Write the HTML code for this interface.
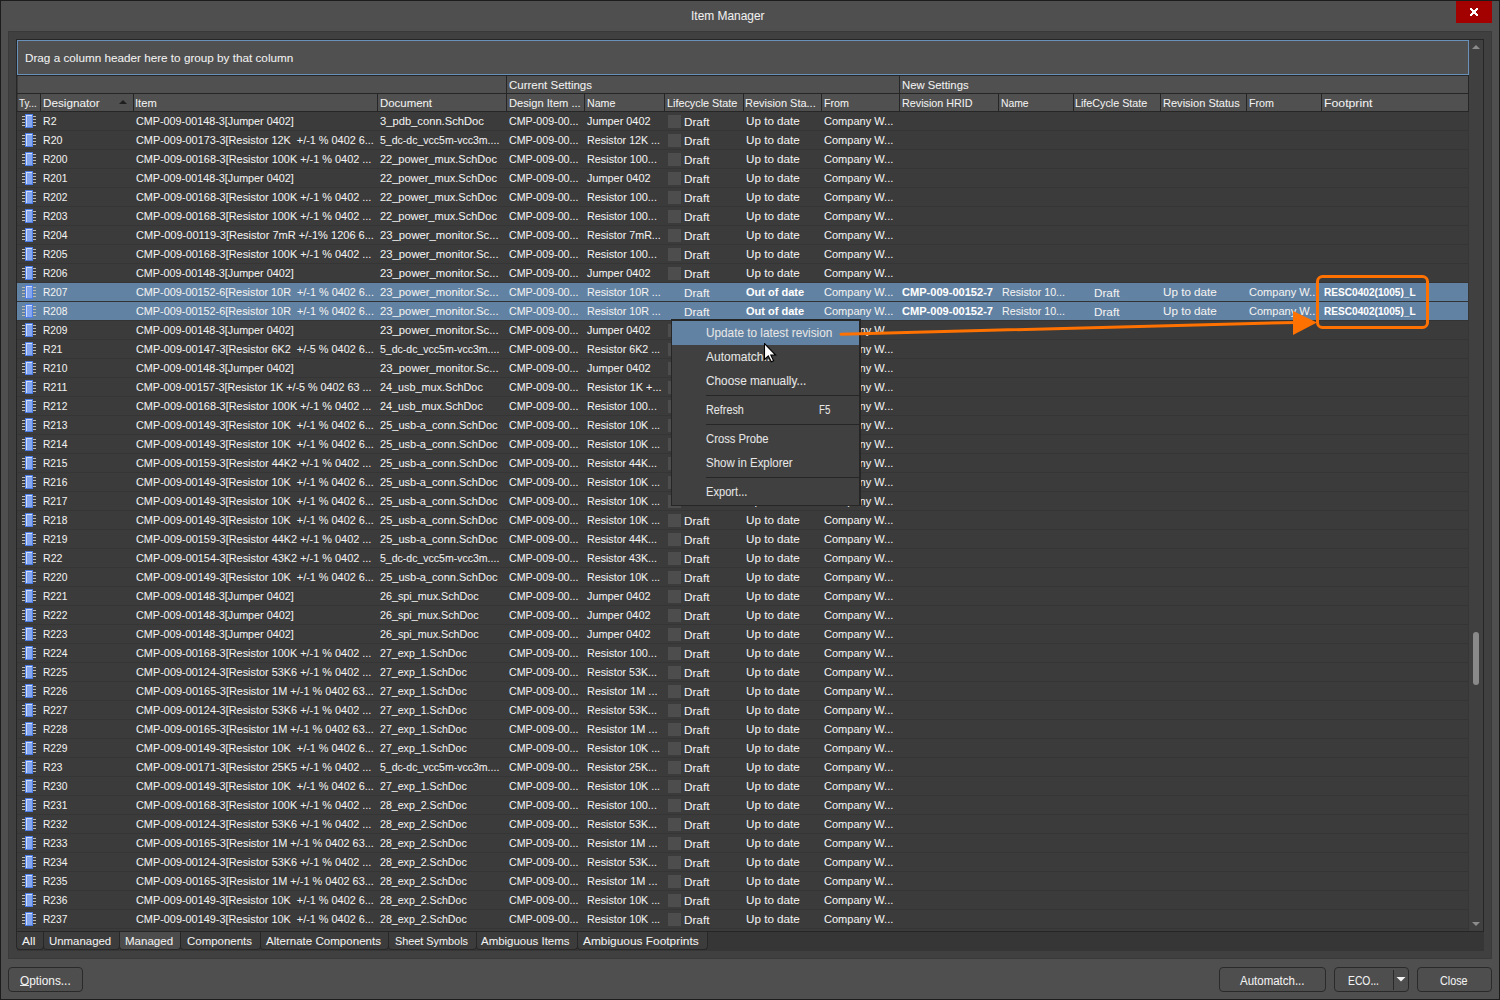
<!DOCTYPE html><html><head><meta charset="utf-8"><title>Item Manager</title><style>
*{margin:0;padding:0;box-sizing:border-box}
html,body{width:1500px;height:1000px;overflow:hidden;background:#4f4f4f}
body{position:relative;font-family:"Liberation Sans",sans-serif;font-size:11.5px;color:#f2f2f2}
.a{position:absolute}
.t{position:absolute;white-space:nowrap;transform-origin:0 0;-webkit-text-stroke:0.05px}
.hd{position:absolute;background:#505050}
.ic{position:absolute}
.ck{position:absolute;width:13px;height:13px;background:#4d4d4d}
.sep{position:absolute;left:706px;width:153px;height:1px;background:#262626}
.tab{position:absolute;top:932px;height:18px;border:1px solid #272727;border-top:none;border-radius:0 0 4px 4px}
.btn{position:absolute;top:967px;height:25px;background:#4e4e4e;border:1px solid #2a2a2a;border-radius:4px}
</style></head><body>
<div class="a" style="left:0;top:0;width:1500px;height:1px;background:#1c1c1c"></div>
<div class="a" style="left:0;top:0;width:1px;height:1000px;background:#1c1c1c"></div>
<div class="a" style="left:1499px;top:0;width:1px;height:1000px;background:#1c1c1c"></div>
<div class="a" style="left:0;top:999px;width:1500px;height:1px;background:#1c1c1c"></div>
<div class="t" style="left:690.50px;top:7px;font-size:12px;line-height:18px;height:18px;color:#f0f0f0;transform:scaleX(0.9940)">Item Manager</div>
<div class="a" style="left:1456px;top:1px;width:36px;height:22px;background:#a30000"></div>
<svg class="a" style="left:1470px;top:8px" width="8" height="8" viewBox="0 0 8 8" shape-rendering="crispEdges"><g fill="#fff"><rect x="0" y="0" width="1" height="1"/><rect x="1" y="0" width="1" height="1"/><rect x="6" y="0" width="1" height="1"/><rect x="7" y="0" width="1" height="1"/><rect x="0" y="1" width="1" height="1"/><rect x="1" y="1" width="1" height="1"/><rect x="2" y="1" width="1" height="1"/><rect x="5" y="1" width="1" height="1"/><rect x="6" y="1" width="1" height="1"/><rect x="7" y="1" width="1" height="1"/><rect x="1" y="2" width="1" height="1"/><rect x="2" y="2" width="1" height="1"/><rect x="3" y="2" width="1" height="1"/><rect x="4" y="2" width="1" height="1"/><rect x="5" y="2" width="1" height="1"/><rect x="6" y="2" width="1" height="1"/><rect x="2" y="3" width="1" height="1"/><rect x="3" y="3" width="1" height="1"/><rect x="4" y="3" width="1" height="1"/><rect x="5" y="3" width="1" height="1"/><rect x="2" y="4" width="1" height="1"/><rect x="3" y="4" width="1" height="1"/><rect x="4" y="4" width="1" height="1"/><rect x="5" y="4" width="1" height="1"/><rect x="1" y="5" width="1" height="1"/><rect x="2" y="5" width="1" height="1"/><rect x="3" y="5" width="1" height="1"/><rect x="4" y="5" width="1" height="1"/><rect x="5" y="5" width="1" height="1"/><rect x="6" y="5" width="1" height="1"/><rect x="0" y="6" width="1" height="1"/><rect x="1" y="6" width="1" height="1"/><rect x="2" y="6" width="1" height="1"/><rect x="5" y="6" width="1" height="1"/><rect x="6" y="6" width="1" height="1"/><rect x="7" y="6" width="1" height="1"/><rect x="0" y="7" width="1" height="1"/><rect x="1" y="7" width="1" height="1"/><rect x="6" y="7" width="1" height="1"/><rect x="7" y="7" width="1" height="1"/></g></svg>
<div class="a" style="left:8px;top:31px;width:1484px;height:928px;background:#404040;border:1px solid #3a3a3a"></div>
<div class="a" style="left:16px;top:39px;width:1468px;height:893px;background:#262626"></div>
<div class="a" style="left:17px;top:40px;width:1452px;height:891px;background:#3b3b3b"></div>
<div class="a" style="left:1469px;top:40px;width:14px;height:891px;background:#404040"></div>
<svg class="a" style="left:1471px;top:43px" width="10" height="8"><path d="M1 6L5 2L9 6Z" fill="#8c8c8c"/></svg>
<svg class="a" style="left:1471px;top:920px" width="10" height="8"><path d="M1 2L5 6L9 2Z" fill="#8c8c8c"/></svg>
<div class="a" style="left:1473px;top:632px;width:6px;height:53px;border-radius:3px;background:#8a8a8a"></div>
<div class="a" style="left:17px;top:40px;width:1452px;height:35px;background:#505050;border:1px solid #6991b9"></div>
<div class="t" style="left:24.50px;top:49px;font-size:11.5px;line-height:18px;height:18px;transform:scaleX(1.0186)">Drag a column header here to group by that column</div>
<div class="a" style="left:17px;top:75px;width:1452px;height:1px;background:#262626"></div>
<div class="hd" style="left:18px;top:76px;width:488px;height:17px"></div>
<div class="hd" style="left:507px;top:76px;width:392px;height:17px"></div>
<div class="hd" style="left:900px;top:76px;width:568px;height:17px"></div>
<div class="a" style="left:17px;top:93px;width:1452px;height:1px;background:#262626"></div>
<div class="a" style="left:506px;top:76px;width:1px;height:17px;background:#262626"></div>
<div class="a" style="left:899px;top:76px;width:1px;height:17px;background:#262626"></div>
<div class="a" style="left:1468px;top:76px;width:1px;height:35px;background:#262626"></div>
<div class="t" style="left:508.60px;top:77px;font-size:11.5px;line-height:17px;height:17px;transform:scaleX(0.9987)">Current Settings</div>
<div class="t" style="left:902.00px;top:77px;font-size:11.5px;line-height:17px;height:17px;transform:scaleX(0.9828)">New Settings</div>
<div class="hd" style="left:18px;top:94px;width:22px;height:17px"></div>
<div class="a" style="left:40px;top:94px;width:1px;height:17px;background:#262626"></div>
<div class="t" style="left:19.30px;top:95px;font-size:11.5px;line-height:17px;height:17px;transform:scaleX(0.8479)">Ty...</div>
<div class="hd" style="left:41px;top:94px;width:92px;height:17px"></div>
<div class="a" style="left:133px;top:94px;width:1px;height:17px;background:#262626"></div>
<div class="t" style="left:42.60px;top:95px;font-size:11.5px;line-height:17px;height:17px;transform:scaleX(1.0193)">Designator</div>
<div class="hd" style="left:134px;top:94px;width:243px;height:17px"></div>
<div class="a" style="left:377px;top:94px;width:1px;height:17px;background:#262626"></div>
<div class="t" style="left:135.30px;top:95px;font-size:11.5px;line-height:17px;height:17px;transform:scaleX(0.9698)">Item</div>
<div class="hd" style="left:378px;top:94px;width:128px;height:17px"></div>
<div class="a" style="left:506px;top:94px;width:1px;height:17px;background:#262626"></div>
<div class="t" style="left:380.00px;top:95px;font-size:11.5px;line-height:17px;height:17px;transform:scaleX(0.9920)">Document</div>
<div class="hd" style="left:507px;top:94px;width:77px;height:17px"></div>
<div class="a" style="left:584px;top:94px;width:1px;height:17px;background:#262626"></div>
<div class="t" style="left:508.60px;top:95px;font-size:11.5px;line-height:17px;height:17px;transform:scaleX(0.9671)">Design Item ...</div>
<div class="hd" style="left:585px;top:94px;width:79px;height:17px"></div>
<div class="a" style="left:664px;top:94px;width:1px;height:17px;background:#262626"></div>
<div class="t" style="left:586.60px;top:95px;font-size:11.5px;line-height:17px;height:17px;transform:scaleX(0.9255)">Name</div>
<div class="hd" style="left:665px;top:94px;width:78px;height:17px"></div>
<div class="a" style="left:743px;top:94px;width:1px;height:17px;background:#262626"></div>
<div class="t" style="left:666.60px;top:95px;font-size:11.5px;line-height:17px;height:17px;transform:scaleX(0.9412)">Lifecycle State</div>
<div class="hd" style="left:744px;top:94px;width:77px;height:17px"></div>
<div class="a" style="left:821px;top:94px;width:1px;height:17px;background:#262626"></div>
<div class="t" style="left:745.30px;top:95px;font-size:11.5px;line-height:17px;height:17px;transform:scaleX(0.9534)">Revision Sta...</div>
<div class="hd" style="left:822px;top:94px;width:77px;height:17px"></div>
<div class="a" style="left:899px;top:94px;width:1px;height:17px;background:#262626"></div>
<div class="t" style="left:823.60px;top:95px;font-size:11.5px;line-height:17px;height:17px;transform:scaleX(0.9313)">From</div>
<div class="hd" style="left:900px;top:94px;width:98px;height:17px"></div>
<div class="a" style="left:998px;top:94px;width:1px;height:17px;background:#262626"></div>
<div class="t" style="left:902.00px;top:95px;font-size:11.5px;line-height:17px;height:17px;transform:scaleX(0.9361)">Revision HRID</div>
<div class="hd" style="left:999px;top:94px;width:74px;height:17px"></div>
<div class="a" style="left:1073px;top:94px;width:1px;height:17px;background:#262626"></div>
<div class="t" style="left:1001.00px;top:95px;font-size:11.5px;line-height:17px;height:17px;transform:scaleX(0.8994)">Name</div>
<div class="hd" style="left:1074px;top:94px;width:86px;height:17px"></div>
<div class="a" style="left:1160px;top:94px;width:1px;height:17px;background:#262626"></div>
<div class="t" style="left:1075.30px;top:95px;font-size:11.5px;line-height:17px;height:17px;transform:scaleX(0.9346)">LifeCycle State</div>
<div class="hd" style="left:1161px;top:94px;width:85px;height:17px"></div>
<div class="a" style="left:1246px;top:94px;width:1px;height:17px;background:#262626"></div>
<div class="t" style="left:1162.60px;top:95px;font-size:11.5px;line-height:17px;height:17px;transform:scaleX(0.9599)">Revision Status</div>
<div class="hd" style="left:1247px;top:94px;width:74px;height:17px"></div>
<div class="a" style="left:1321px;top:94px;width:1px;height:17px;background:#262626"></div>
<div class="t" style="left:1248.60px;top:95px;font-size:11.5px;line-height:17px;height:17px;transform:scaleX(0.9313)">From</div>
<div class="hd" style="left:1322px;top:94px;width:146px;height:17px"></div>
<div class="a" style="left:1468px;top:94px;width:1px;height:17px;background:#262626"></div>
<div class="t" style="left:1323.60px;top:95px;font-size:11.5px;line-height:17px;height:17px;transform:scaleX(1.0663)">Footprint</div>
<div class="a" style="left:17px;top:111px;width:1452px;height:1px;background:#262626"></div>
<svg class="a" style="left:118px;top:99px" width="10" height="6"><path d="M1 5L5 1L9 5Z" fill="#1e1e1e"/></svg>
<div class="a" style="left:17px;top:130px;width:1451px;height:1px;background:#353535"></div>
<svg class="ic" style="left:22px;top:114px" width="15" height="14" viewBox="0 0 15 14"><g fill="#bdb9ae"><rect x="0" y="2" width="3" height="1"/><rect x="0" y="5" width="3" height="1"/><rect x="0" y="8" width="3" height="1"/><rect x="0" y="11" width="3" height="1"/><rect x="11" y="2" width="3" height="1"/><rect x="11" y="5" width="3" height="1"/><rect x="11" y="8" width="3" height="1"/><rect x="11" y="11" width="3" height="1"/></g><rect x="3" y="0" width="8" height="14" fill="#4d7de6"/><rect x="4" y="1" width="6" height="12" fill="#84a6ee"/><rect x="4" y="1" width="6" height="1" fill="#d2ddf8"/><rect x="4" y="1" width="1" height="12" fill="#d2ddf8"/></svg>
<div class="t" style="left:42.80px;top:112px;font-size:11.5px;line-height:18px;height:18px;transform:scaleX(0.9182)">R2</div>
<div class="t" style="left:135.90px;top:112px;font-size:11.5px;line-height:18px;height:18px;transform:scaleX(0.9380)">CMP-009-00148-3[Jumper 0402]</div>
<div class="t" style="left:379.50px;top:112px;font-size:11.5px;line-height:18px;height:18px;transform:scaleX(0.9730)">3_pdb_conn.SchDoc</div>
<div class="t" style="left:508.60px;top:112px;font-size:11.5px;line-height:18px;height:18px;transform:scaleX(0.9280)">CMP-009-00...</div>
<div class="t" style="left:586.80px;top:112px;font-size:11.5px;line-height:18px;height:18px;transform:scaleX(0.9460)">Jumper 0402</div>
<div class="ck" style="left:668px;top:115px"></div>
<div class="t" style="left:683.80px;top:113px;font-size:11.5px;line-height:18px;height:18px;transform:scaleX(1.0192)">Draft</div>
<div class="t" style="left:746.00px;top:112px;font-size:11.5px;line-height:18px;height:18px;transform:scaleX(1.0136)">Up to date</div>
<div class="t" style="left:824.10px;top:112px;font-size:11.5px;line-height:18px;height:18px;transform:scaleX(0.9596)">Company W...</div>
<div class="a" style="left:17px;top:149px;width:1451px;height:1px;background:#353535"></div>
<svg class="ic" style="left:22px;top:133px" width="15" height="14" viewBox="0 0 15 14"><g fill="#bdb9ae"><rect x="0" y="2" width="3" height="1"/><rect x="0" y="5" width="3" height="1"/><rect x="0" y="8" width="3" height="1"/><rect x="0" y="11" width="3" height="1"/><rect x="11" y="2" width="3" height="1"/><rect x="11" y="5" width="3" height="1"/><rect x="11" y="8" width="3" height="1"/><rect x="11" y="11" width="3" height="1"/></g><rect x="3" y="0" width="8" height="14" fill="#4d7de6"/><rect x="4" y="1" width="6" height="12" fill="#84a6ee"/><rect x="4" y="1" width="6" height="1" fill="#d2ddf8"/><rect x="4" y="1" width="1" height="12" fill="#d2ddf8"/></svg>
<div class="t" style="left:42.80px;top:131px;font-size:11.5px;line-height:18px;height:18px;transform:scaleX(0.9238)">R20</div>
<div class="t" style="left:135.90px;top:131px;font-size:11.5px;line-height:18px;height:18px;transform:scaleX(0.9457)">CMP-009-00173-3[Resistor 12K&nbsp; +/-1 % 0402 6...</div>
<div class="t" style="left:379.50px;top:131px;font-size:11.5px;line-height:18px;height:18px;transform:scaleX(0.9151)">5_dc-dc_vcc5m-vcc3m....</div>
<div class="t" style="left:508.60px;top:131px;font-size:11.5px;line-height:18px;height:18px;transform:scaleX(0.9280)">CMP-009-00...</div>
<div class="t" style="left:586.80px;top:131px;font-size:11.5px;line-height:18px;height:18px;transform:scaleX(0.9285)">Resistor 12K ...</div>
<div class="ck" style="left:668px;top:134px"></div>
<div class="t" style="left:683.80px;top:132px;font-size:11.5px;line-height:18px;height:18px;transform:scaleX(1.0192)">Draft</div>
<div class="t" style="left:746.00px;top:131px;font-size:11.5px;line-height:18px;height:18px;transform:scaleX(1.0136)">Up to date</div>
<div class="t" style="left:824.10px;top:131px;font-size:11.5px;line-height:18px;height:18px;transform:scaleX(0.9596)">Company W...</div>
<div class="a" style="left:17px;top:168px;width:1451px;height:1px;background:#353535"></div>
<svg class="ic" style="left:22px;top:152px" width="15" height="14" viewBox="0 0 15 14"><g fill="#bdb9ae"><rect x="0" y="2" width="3" height="1"/><rect x="0" y="5" width="3" height="1"/><rect x="0" y="8" width="3" height="1"/><rect x="0" y="11" width="3" height="1"/><rect x="11" y="2" width="3" height="1"/><rect x="11" y="5" width="3" height="1"/><rect x="11" y="8" width="3" height="1"/><rect x="11" y="11" width="3" height="1"/></g><rect x="3" y="0" width="8" height="14" fill="#4d7de6"/><rect x="4" y="1" width="6" height="12" fill="#84a6ee"/><rect x="4" y="1" width="6" height="1" fill="#d2ddf8"/><rect x="4" y="1" width="1" height="12" fill="#d2ddf8"/></svg>
<div class="t" style="left:42.80px;top:150px;font-size:11.5px;line-height:18px;height:18px;transform:scaleX(0.8873)">R200</div>
<div class="t" style="left:135.90px;top:150px;font-size:11.5px;line-height:18px;height:18px;transform:scaleX(0.9479)">CMP-009-00168-3[Resistor 100K +/-1 % 0402 ...</div>
<div class="t" style="left:379.50px;top:150px;font-size:11.5px;line-height:18px;height:18px;transform:scaleX(0.9575)">22_power_mux.SchDoc</div>
<div class="t" style="left:508.60px;top:150px;font-size:11.5px;line-height:18px;height:18px;transform:scaleX(0.9280)">CMP-009-00...</div>
<div class="t" style="left:586.80px;top:150px;font-size:11.5px;line-height:18px;height:18px;transform:scaleX(0.9426)">Resistor 100...</div>
<div class="ck" style="left:668px;top:153px"></div>
<div class="t" style="left:683.80px;top:151px;font-size:11.5px;line-height:18px;height:18px;transform:scaleX(1.0192)">Draft</div>
<div class="t" style="left:746.00px;top:150px;font-size:11.5px;line-height:18px;height:18px;transform:scaleX(1.0136)">Up to date</div>
<div class="t" style="left:824.10px;top:150px;font-size:11.5px;line-height:18px;height:18px;transform:scaleX(0.9596)">Company W...</div>
<div class="a" style="left:17px;top:187px;width:1451px;height:1px;background:#353535"></div>
<svg class="ic" style="left:22px;top:171px" width="15" height="14" viewBox="0 0 15 14"><g fill="#bdb9ae"><rect x="0" y="2" width="3" height="1"/><rect x="0" y="5" width="3" height="1"/><rect x="0" y="8" width="3" height="1"/><rect x="0" y="11" width="3" height="1"/><rect x="11" y="2" width="3" height="1"/><rect x="11" y="5" width="3" height="1"/><rect x="11" y="8" width="3" height="1"/><rect x="11" y="11" width="3" height="1"/></g><rect x="3" y="0" width="8" height="14" fill="#4d7de6"/><rect x="4" y="1" width="6" height="12" fill="#84a6ee"/><rect x="4" y="1" width="6" height="1" fill="#d2ddf8"/><rect x="4" y="1" width="1" height="12" fill="#d2ddf8"/></svg>
<div class="t" style="left:42.80px;top:169px;font-size:11.5px;line-height:18px;height:18px;transform:scaleX(0.8873)">R201</div>
<div class="t" style="left:135.90px;top:169px;font-size:11.5px;line-height:18px;height:18px;transform:scaleX(0.9380)">CMP-009-00148-3[Jumper 0402]</div>
<div class="t" style="left:379.50px;top:169px;font-size:11.5px;line-height:18px;height:18px;transform:scaleX(0.9575)">22_power_mux.SchDoc</div>
<div class="t" style="left:508.60px;top:169px;font-size:11.5px;line-height:18px;height:18px;transform:scaleX(0.9280)">CMP-009-00...</div>
<div class="t" style="left:586.80px;top:169px;font-size:11.5px;line-height:18px;height:18px;transform:scaleX(0.9460)">Jumper 0402</div>
<div class="ck" style="left:668px;top:172px"></div>
<div class="t" style="left:683.80px;top:170px;font-size:11.5px;line-height:18px;height:18px;transform:scaleX(1.0192)">Draft</div>
<div class="t" style="left:746.00px;top:169px;font-size:11.5px;line-height:18px;height:18px;transform:scaleX(1.0136)">Up to date</div>
<div class="t" style="left:824.10px;top:169px;font-size:11.5px;line-height:18px;height:18px;transform:scaleX(0.9596)">Company W...</div>
<div class="a" style="left:17px;top:206px;width:1451px;height:1px;background:#353535"></div>
<svg class="ic" style="left:22px;top:190px" width="15" height="14" viewBox="0 0 15 14"><g fill="#bdb9ae"><rect x="0" y="2" width="3" height="1"/><rect x="0" y="5" width="3" height="1"/><rect x="0" y="8" width="3" height="1"/><rect x="0" y="11" width="3" height="1"/><rect x="11" y="2" width="3" height="1"/><rect x="11" y="5" width="3" height="1"/><rect x="11" y="8" width="3" height="1"/><rect x="11" y="11" width="3" height="1"/></g><rect x="3" y="0" width="8" height="14" fill="#4d7de6"/><rect x="4" y="1" width="6" height="12" fill="#84a6ee"/><rect x="4" y="1" width="6" height="1" fill="#d2ddf8"/><rect x="4" y="1" width="1" height="12" fill="#d2ddf8"/></svg>
<div class="t" style="left:42.80px;top:188px;font-size:11.5px;line-height:18px;height:18px;transform:scaleX(0.8873)">R202</div>
<div class="t" style="left:135.90px;top:188px;font-size:11.5px;line-height:18px;height:18px;transform:scaleX(0.9479)">CMP-009-00168-3[Resistor 100K +/-1 % 0402 ...</div>
<div class="t" style="left:379.50px;top:188px;font-size:11.5px;line-height:18px;height:18px;transform:scaleX(0.9575)">22_power_mux.SchDoc</div>
<div class="t" style="left:508.60px;top:188px;font-size:11.5px;line-height:18px;height:18px;transform:scaleX(0.9280)">CMP-009-00...</div>
<div class="t" style="left:586.80px;top:188px;font-size:11.5px;line-height:18px;height:18px;transform:scaleX(0.9426)">Resistor 100...</div>
<div class="ck" style="left:668px;top:191px"></div>
<div class="t" style="left:683.80px;top:189px;font-size:11.5px;line-height:18px;height:18px;transform:scaleX(1.0192)">Draft</div>
<div class="t" style="left:746.00px;top:188px;font-size:11.5px;line-height:18px;height:18px;transform:scaleX(1.0136)">Up to date</div>
<div class="t" style="left:824.10px;top:188px;font-size:11.5px;line-height:18px;height:18px;transform:scaleX(0.9596)">Company W...</div>
<div class="a" style="left:17px;top:225px;width:1451px;height:1px;background:#353535"></div>
<svg class="ic" style="left:22px;top:209px" width="15" height="14" viewBox="0 0 15 14"><g fill="#bdb9ae"><rect x="0" y="2" width="3" height="1"/><rect x="0" y="5" width="3" height="1"/><rect x="0" y="8" width="3" height="1"/><rect x="0" y="11" width="3" height="1"/><rect x="11" y="2" width="3" height="1"/><rect x="11" y="5" width="3" height="1"/><rect x="11" y="8" width="3" height="1"/><rect x="11" y="11" width="3" height="1"/></g><rect x="3" y="0" width="8" height="14" fill="#4d7de6"/><rect x="4" y="1" width="6" height="12" fill="#84a6ee"/><rect x="4" y="1" width="6" height="1" fill="#d2ddf8"/><rect x="4" y="1" width="1" height="12" fill="#d2ddf8"/></svg>
<div class="t" style="left:42.80px;top:207px;font-size:11.5px;line-height:18px;height:18px;transform:scaleX(0.8873)">R203</div>
<div class="t" style="left:135.90px;top:207px;font-size:11.5px;line-height:18px;height:18px;transform:scaleX(0.9479)">CMP-009-00168-3[Resistor 100K +/-1 % 0402 ...</div>
<div class="t" style="left:379.50px;top:207px;font-size:11.5px;line-height:18px;height:18px;transform:scaleX(0.9575)">22_power_mux.SchDoc</div>
<div class="t" style="left:508.60px;top:207px;font-size:11.5px;line-height:18px;height:18px;transform:scaleX(0.9280)">CMP-009-00...</div>
<div class="t" style="left:586.80px;top:207px;font-size:11.5px;line-height:18px;height:18px;transform:scaleX(0.9426)">Resistor 100...</div>
<div class="ck" style="left:668px;top:210px"></div>
<div class="t" style="left:683.80px;top:208px;font-size:11.5px;line-height:18px;height:18px;transform:scaleX(1.0192)">Draft</div>
<div class="t" style="left:746.00px;top:207px;font-size:11.5px;line-height:18px;height:18px;transform:scaleX(1.0136)">Up to date</div>
<div class="t" style="left:824.10px;top:207px;font-size:11.5px;line-height:18px;height:18px;transform:scaleX(0.9596)">Company W...</div>
<div class="a" style="left:17px;top:244px;width:1451px;height:1px;background:#353535"></div>
<svg class="ic" style="left:22px;top:228px" width="15" height="14" viewBox="0 0 15 14"><g fill="#bdb9ae"><rect x="0" y="2" width="3" height="1"/><rect x="0" y="5" width="3" height="1"/><rect x="0" y="8" width="3" height="1"/><rect x="0" y="11" width="3" height="1"/><rect x="11" y="2" width="3" height="1"/><rect x="11" y="5" width="3" height="1"/><rect x="11" y="8" width="3" height="1"/><rect x="11" y="11" width="3" height="1"/></g><rect x="3" y="0" width="8" height="14" fill="#4d7de6"/><rect x="4" y="1" width="6" height="12" fill="#84a6ee"/><rect x="4" y="1" width="6" height="1" fill="#d2ddf8"/><rect x="4" y="1" width="1" height="12" fill="#d2ddf8"/></svg>
<div class="t" style="left:42.80px;top:226px;font-size:11.5px;line-height:18px;height:18px;transform:scaleX(0.8873)">R204</div>
<div class="t" style="left:135.90px;top:226px;font-size:11.5px;line-height:18px;height:18px;transform:scaleX(0.9589)">CMP-009-00119-3[Resistor 7mR +/-1% 1206 6...</div>
<div class="t" style="left:379.50px;top:226px;font-size:11.5px;line-height:18px;height:18px;transform:scaleX(0.9816)">23_power_monitor.Sc...</div>
<div class="t" style="left:508.60px;top:226px;font-size:11.5px;line-height:18px;height:18px;transform:scaleX(0.9280)">CMP-009-00...</div>
<div class="t" style="left:586.80px;top:226px;font-size:11.5px;line-height:18px;height:18px;transform:scaleX(0.9312)">Resistor 7mR...</div>
<div class="ck" style="left:668px;top:229px"></div>
<div class="t" style="left:683.80px;top:227px;font-size:11.5px;line-height:18px;height:18px;transform:scaleX(1.0192)">Draft</div>
<div class="t" style="left:746.00px;top:226px;font-size:11.5px;line-height:18px;height:18px;transform:scaleX(1.0136)">Up to date</div>
<div class="t" style="left:824.10px;top:226px;font-size:11.5px;line-height:18px;height:18px;transform:scaleX(0.9596)">Company W...</div>
<div class="a" style="left:17px;top:263px;width:1451px;height:1px;background:#353535"></div>
<svg class="ic" style="left:22px;top:247px" width="15" height="14" viewBox="0 0 15 14"><g fill="#bdb9ae"><rect x="0" y="2" width="3" height="1"/><rect x="0" y="5" width="3" height="1"/><rect x="0" y="8" width="3" height="1"/><rect x="0" y="11" width="3" height="1"/><rect x="11" y="2" width="3" height="1"/><rect x="11" y="5" width="3" height="1"/><rect x="11" y="8" width="3" height="1"/><rect x="11" y="11" width="3" height="1"/></g><rect x="3" y="0" width="8" height="14" fill="#4d7de6"/><rect x="4" y="1" width="6" height="12" fill="#84a6ee"/><rect x="4" y="1" width="6" height="1" fill="#d2ddf8"/><rect x="4" y="1" width="1" height="12" fill="#d2ddf8"/></svg>
<div class="t" style="left:42.80px;top:245px;font-size:11.5px;line-height:18px;height:18px;transform:scaleX(0.8873)">R205</div>
<div class="t" style="left:135.90px;top:245px;font-size:11.5px;line-height:18px;height:18px;transform:scaleX(0.9479)">CMP-009-00168-3[Resistor 100K +/-1 % 0402 ...</div>
<div class="t" style="left:379.50px;top:245px;font-size:11.5px;line-height:18px;height:18px;transform:scaleX(0.9816)">23_power_monitor.Sc...</div>
<div class="t" style="left:508.60px;top:245px;font-size:11.5px;line-height:18px;height:18px;transform:scaleX(0.9280)">CMP-009-00...</div>
<div class="t" style="left:586.80px;top:245px;font-size:11.5px;line-height:18px;height:18px;transform:scaleX(0.9426)">Resistor 100...</div>
<div class="ck" style="left:668px;top:248px"></div>
<div class="t" style="left:683.80px;top:246px;font-size:11.5px;line-height:18px;height:18px;transform:scaleX(1.0192)">Draft</div>
<div class="t" style="left:746.00px;top:245px;font-size:11.5px;line-height:18px;height:18px;transform:scaleX(1.0136)">Up to date</div>
<div class="t" style="left:824.10px;top:245px;font-size:11.5px;line-height:18px;height:18px;transform:scaleX(0.9596)">Company W...</div>
<div class="a" style="left:17px;top:282px;width:1451px;height:1px;background:#353535"></div>
<svg class="ic" style="left:22px;top:266px" width="15" height="14" viewBox="0 0 15 14"><g fill="#bdb9ae"><rect x="0" y="2" width="3" height="1"/><rect x="0" y="5" width="3" height="1"/><rect x="0" y="8" width="3" height="1"/><rect x="0" y="11" width="3" height="1"/><rect x="11" y="2" width="3" height="1"/><rect x="11" y="5" width="3" height="1"/><rect x="11" y="8" width="3" height="1"/><rect x="11" y="11" width="3" height="1"/></g><rect x="3" y="0" width="8" height="14" fill="#4d7de6"/><rect x="4" y="1" width="6" height="12" fill="#84a6ee"/><rect x="4" y="1" width="6" height="1" fill="#d2ddf8"/><rect x="4" y="1" width="1" height="12" fill="#d2ddf8"/></svg>
<div class="t" style="left:42.80px;top:264px;font-size:11.5px;line-height:18px;height:18px;transform:scaleX(0.8873)">R206</div>
<div class="t" style="left:135.90px;top:264px;font-size:11.5px;line-height:18px;height:18px;transform:scaleX(0.9380)">CMP-009-00148-3[Jumper 0402]</div>
<div class="t" style="left:379.50px;top:264px;font-size:11.5px;line-height:18px;height:18px;transform:scaleX(0.9816)">23_power_monitor.Sc...</div>
<div class="t" style="left:508.60px;top:264px;font-size:11.5px;line-height:18px;height:18px;transform:scaleX(0.9280)">CMP-009-00...</div>
<div class="t" style="left:586.80px;top:264px;font-size:11.5px;line-height:18px;height:18px;transform:scaleX(0.9460)">Jumper 0402</div>
<div class="ck" style="left:668px;top:267px"></div>
<div class="t" style="left:683.80px;top:265px;font-size:11.5px;line-height:18px;height:18px;transform:scaleX(1.0192)">Draft</div>
<div class="t" style="left:746.00px;top:264px;font-size:11.5px;line-height:18px;height:18px;transform:scaleX(1.0136)">Up to date</div>
<div class="t" style="left:824.10px;top:264px;font-size:11.5px;line-height:18px;height:18px;transform:scaleX(0.9596)">Company W...</div>
<div class="a" style="left:17px;top:283px;width:1451px;height:18px;background:#6282a3"></div>
<div class="a" style="left:17px;top:301px;width:1451px;height:1px;background:#333333"></div>
<svg class="ic" style="left:22px;top:285px" width="15" height="14" viewBox="0 0 15 14"><g fill="#bdb9ae"><rect x="0" y="2" width="3" height="1"/><rect x="0" y="5" width="3" height="1"/><rect x="0" y="8" width="3" height="1"/><rect x="0" y="11" width="3" height="1"/><rect x="11" y="2" width="3" height="1"/><rect x="11" y="5" width="3" height="1"/><rect x="11" y="8" width="3" height="1"/><rect x="11" y="11" width="3" height="1"/></g><rect x="3" y="0" width="8" height="14" fill="#4d7de6"/><rect x="4" y="1" width="6" height="12" fill="#84a6ee"/><rect x="4" y="1" width="6" height="1" fill="#d2ddf8"/><rect x="4" y="1" width="1" height="12" fill="#d2ddf8"/></svg>
<div class="t" style="left:42.80px;top:283px;font-size:11.5px;line-height:18px;height:18px;transform:scaleX(0.8873)">R207</div>
<div class="t" style="left:135.90px;top:283px;font-size:11.5px;line-height:18px;height:18px;transform:scaleX(0.9434)">CMP-009-00152-6[Resistor 10R&nbsp; +/-1 % 0402 6...</div>
<div class="t" style="left:379.50px;top:283px;font-size:11.5px;line-height:18px;height:18px;transform:scaleX(0.9816)">23_power_monitor.Sc...</div>
<div class="t" style="left:508.60px;top:283px;font-size:11.5px;line-height:18px;height:18px;transform:scaleX(0.9280)">CMP-009-00...</div>
<div class="t" style="left:586.80px;top:283px;font-size:11.5px;line-height:18px;height:18px;transform:scaleX(0.9312)">Resistor 10R ...</div>
<div class="t" style="left:683.80px;top:284px;font-size:11.5px;line-height:18px;height:18px;transform:scaleX(1.0192)">Draft</div>
<div class="t" style="left:746.00px;top:283px;font-size:11.5px;line-height:18px;height:18px;font-weight:bold;color:#fff;transform:scaleX(0.9571)">Out of date</div>
<div class="t" style="left:824.10px;top:283px;font-size:11.5px;line-height:18px;height:18px;transform:scaleX(0.9596)">Company W...</div>
<div class="t" style="left:902.30px;top:283px;font-size:11.5px;line-height:18px;height:18px;font-weight:bold;color:#fff;transform:scaleX(0.9618)">CMP-009-00152-7</div>
<div class="t" style="left:1001.50px;top:283px;font-size:11.5px;line-height:18px;height:18px;transform:scaleX(0.9299)">Resistor 10...</div>
<div class="t" style="left:1093.60px;top:284px;font-size:11.5px;line-height:18px;height:18px;transform:scaleX(1.0192)">Draft</div>
<div class="t" style="left:1163.30px;top:283px;font-size:11.5px;line-height:18px;height:18px;transform:scaleX(1.0136)">Up to date</div>
<div class="t" style="left:1249.30px;top:283px;font-size:11.5px;line-height:18px;height:18px;transform:scaleX(0.9596)">Company W...</div>
<div class="t" style="left:1324.30px;top:283px;font-size:11.5px;line-height:18px;height:18px;font-weight:bold;color:#fff;transform:scaleX(0.8791)">RESC0402(1005)_L</div>
<div class="a" style="left:17px;top:302px;width:1451px;height:18px;background:#6282a3"></div>
<div class="a" style="left:17px;top:320px;width:1451px;height:1px;background:#333333"></div>
<svg class="ic" style="left:22px;top:304px" width="15" height="14" viewBox="0 0 15 14"><g fill="#bdb9ae"><rect x="0" y="2" width="3" height="1"/><rect x="0" y="5" width="3" height="1"/><rect x="0" y="8" width="3" height="1"/><rect x="0" y="11" width="3" height="1"/><rect x="11" y="2" width="3" height="1"/><rect x="11" y="5" width="3" height="1"/><rect x="11" y="8" width="3" height="1"/><rect x="11" y="11" width="3" height="1"/></g><rect x="3" y="0" width="8" height="14" fill="#4d7de6"/><rect x="4" y="1" width="6" height="12" fill="#84a6ee"/><rect x="4" y="1" width="6" height="1" fill="#d2ddf8"/><rect x="4" y="1" width="1" height="12" fill="#d2ddf8"/></svg>
<div class="t" style="left:42.80px;top:302px;font-size:11.5px;line-height:18px;height:18px;transform:scaleX(0.8873)">R208</div>
<div class="t" style="left:135.90px;top:302px;font-size:11.5px;line-height:18px;height:18px;transform:scaleX(0.9434)">CMP-009-00152-6[Resistor 10R&nbsp; +/-1 % 0402 6...</div>
<div class="t" style="left:379.50px;top:302px;font-size:11.5px;line-height:18px;height:18px;transform:scaleX(0.9816)">23_power_monitor.Sc...</div>
<div class="t" style="left:508.60px;top:302px;font-size:11.5px;line-height:18px;height:18px;transform:scaleX(0.9280)">CMP-009-00...</div>
<div class="t" style="left:586.80px;top:302px;font-size:11.5px;line-height:18px;height:18px;transform:scaleX(0.9312)">Resistor 10R ...</div>
<div class="t" style="left:683.80px;top:303px;font-size:11.5px;line-height:18px;height:18px;transform:scaleX(1.0192)">Draft</div>
<div class="t" style="left:746.00px;top:302px;font-size:11.5px;line-height:18px;height:18px;font-weight:bold;color:#fff;transform:scaleX(0.9571)">Out of date</div>
<div class="t" style="left:824.10px;top:302px;font-size:11.5px;line-height:18px;height:18px;transform:scaleX(0.9596)">Company W...</div>
<div class="t" style="left:902.30px;top:302px;font-size:11.5px;line-height:18px;height:18px;font-weight:bold;color:#fff;transform:scaleX(0.9618)">CMP-009-00152-7</div>
<div class="t" style="left:1001.50px;top:302px;font-size:11.5px;line-height:18px;height:18px;transform:scaleX(0.9299)">Resistor 10...</div>
<div class="t" style="left:1093.60px;top:303px;font-size:11.5px;line-height:18px;height:18px;transform:scaleX(1.0192)">Draft</div>
<div class="t" style="left:1163.30px;top:302px;font-size:11.5px;line-height:18px;height:18px;transform:scaleX(1.0136)">Up to date</div>
<div class="t" style="left:1249.30px;top:302px;font-size:11.5px;line-height:18px;height:18px;transform:scaleX(0.9596)">Company W...</div>
<div class="t" style="left:1324.30px;top:302px;font-size:11.5px;line-height:18px;height:18px;font-weight:bold;color:#fff;transform:scaleX(0.8791)">RESC0402(1005)_L</div>
<div class="a" style="left:17px;top:339px;width:1451px;height:1px;background:#353535"></div>
<svg class="ic" style="left:22px;top:323px" width="15" height="14" viewBox="0 0 15 14"><g fill="#bdb9ae"><rect x="0" y="2" width="3" height="1"/><rect x="0" y="5" width="3" height="1"/><rect x="0" y="8" width="3" height="1"/><rect x="0" y="11" width="3" height="1"/><rect x="11" y="2" width="3" height="1"/><rect x="11" y="5" width="3" height="1"/><rect x="11" y="8" width="3" height="1"/><rect x="11" y="11" width="3" height="1"/></g><rect x="3" y="0" width="8" height="14" fill="#4d7de6"/><rect x="4" y="1" width="6" height="12" fill="#84a6ee"/><rect x="4" y="1" width="6" height="1" fill="#d2ddf8"/><rect x="4" y="1" width="1" height="12" fill="#d2ddf8"/></svg>
<div class="t" style="left:42.80px;top:321px;font-size:11.5px;line-height:18px;height:18px;transform:scaleX(0.8873)">R209</div>
<div class="t" style="left:135.90px;top:321px;font-size:11.5px;line-height:18px;height:18px;transform:scaleX(0.9380)">CMP-009-00148-3[Jumper 0402]</div>
<div class="t" style="left:379.50px;top:321px;font-size:11.5px;line-height:18px;height:18px;transform:scaleX(0.9816)">23_power_monitor.Sc...</div>
<div class="t" style="left:508.60px;top:321px;font-size:11.5px;line-height:18px;height:18px;transform:scaleX(0.9280)">CMP-009-00...</div>
<div class="t" style="left:586.80px;top:321px;font-size:11.5px;line-height:18px;height:18px;transform:scaleX(0.9460)">Jumper 0402</div>
<div class="ck" style="left:668px;top:324px"></div>
<div class="t" style="left:683.80px;top:322px;font-size:11.5px;line-height:18px;height:18px;transform:scaleX(1.0192)">Draft</div>
<div class="t" style="left:746.00px;top:321px;font-size:11.5px;line-height:18px;height:18px;transform:scaleX(1.0136)">Up to date</div>
<div class="t" style="left:824.10px;top:321px;font-size:11.5px;line-height:18px;height:18px;transform:scaleX(0.9596)">Company W...</div>
<div class="a" style="left:17px;top:358px;width:1451px;height:1px;background:#353535"></div>
<svg class="ic" style="left:22px;top:342px" width="15" height="14" viewBox="0 0 15 14"><g fill="#bdb9ae"><rect x="0" y="2" width="3" height="1"/><rect x="0" y="5" width="3" height="1"/><rect x="0" y="8" width="3" height="1"/><rect x="0" y="11" width="3" height="1"/><rect x="11" y="2" width="3" height="1"/><rect x="11" y="5" width="3" height="1"/><rect x="11" y="8" width="3" height="1"/><rect x="11" y="11" width="3" height="1"/></g><rect x="3" y="0" width="8" height="14" fill="#4d7de6"/><rect x="4" y="1" width="6" height="12" fill="#84a6ee"/><rect x="4" y="1" width="6" height="1" fill="#d2ddf8"/><rect x="4" y="1" width="1" height="12" fill="#d2ddf8"/></svg>
<div class="t" style="left:42.80px;top:340px;font-size:11.5px;line-height:18px;height:18px;transform:scaleX(0.9238)">R21</div>
<div class="t" style="left:135.90px;top:340px;font-size:11.5px;line-height:18px;height:18px;transform:scaleX(0.9457)">CMP-009-00147-3[Resistor 6K2&nbsp; +/-5 % 0402 6...</div>
<div class="t" style="left:379.50px;top:340px;font-size:11.5px;line-height:18px;height:18px;transform:scaleX(0.9151)">5_dc-dc_vcc5m-vcc3m....</div>
<div class="t" style="left:508.60px;top:340px;font-size:11.5px;line-height:18px;height:18px;transform:scaleX(0.9280)">CMP-009-00...</div>
<div class="t" style="left:586.80px;top:340px;font-size:11.5px;line-height:18px;height:18px;transform:scaleX(0.9297)">Resistor 6K2 ...</div>
<div class="ck" style="left:668px;top:343px"></div>
<div class="t" style="left:683.80px;top:341px;font-size:11.5px;line-height:18px;height:18px;transform:scaleX(1.0192)">Draft</div>
<div class="t" style="left:746.00px;top:340px;font-size:11.5px;line-height:18px;height:18px;transform:scaleX(1.0136)">Up to date</div>
<div class="t" style="left:824.10px;top:340px;font-size:11.5px;line-height:18px;height:18px;transform:scaleX(0.9596)">Company W...</div>
<div class="a" style="left:17px;top:377px;width:1451px;height:1px;background:#353535"></div>
<svg class="ic" style="left:22px;top:361px" width="15" height="14" viewBox="0 0 15 14"><g fill="#bdb9ae"><rect x="0" y="2" width="3" height="1"/><rect x="0" y="5" width="3" height="1"/><rect x="0" y="8" width="3" height="1"/><rect x="0" y="11" width="3" height="1"/><rect x="11" y="2" width="3" height="1"/><rect x="11" y="5" width="3" height="1"/><rect x="11" y="8" width="3" height="1"/><rect x="11" y="11" width="3" height="1"/></g><rect x="3" y="0" width="8" height="14" fill="#4d7de6"/><rect x="4" y="1" width="6" height="12" fill="#84a6ee"/><rect x="4" y="1" width="6" height="1" fill="#d2ddf8"/><rect x="4" y="1" width="1" height="12" fill="#d2ddf8"/></svg>
<div class="t" style="left:42.80px;top:359px;font-size:11.5px;line-height:18px;height:18px;transform:scaleX(0.8873)">R210</div>
<div class="t" style="left:135.90px;top:359px;font-size:11.5px;line-height:18px;height:18px;transform:scaleX(0.9380)">CMP-009-00148-3[Jumper 0402]</div>
<div class="t" style="left:379.50px;top:359px;font-size:11.5px;line-height:18px;height:18px;transform:scaleX(0.9816)">23_power_monitor.Sc...</div>
<div class="t" style="left:508.60px;top:359px;font-size:11.5px;line-height:18px;height:18px;transform:scaleX(0.9280)">CMP-009-00...</div>
<div class="t" style="left:586.80px;top:359px;font-size:11.5px;line-height:18px;height:18px;transform:scaleX(0.9460)">Jumper 0402</div>
<div class="ck" style="left:668px;top:362px"></div>
<div class="t" style="left:683.80px;top:360px;font-size:11.5px;line-height:18px;height:18px;transform:scaleX(1.0192)">Draft</div>
<div class="t" style="left:746.00px;top:359px;font-size:11.5px;line-height:18px;height:18px;transform:scaleX(1.0136)">Up to date</div>
<div class="t" style="left:824.10px;top:359px;font-size:11.5px;line-height:18px;height:18px;transform:scaleX(0.9596)">Company W...</div>
<div class="a" style="left:17px;top:396px;width:1451px;height:1px;background:#353535"></div>
<svg class="ic" style="left:22px;top:380px" width="15" height="14" viewBox="0 0 15 14"><g fill="#bdb9ae"><rect x="0" y="2" width="3" height="1"/><rect x="0" y="5" width="3" height="1"/><rect x="0" y="8" width="3" height="1"/><rect x="0" y="11" width="3" height="1"/><rect x="11" y="2" width="3" height="1"/><rect x="11" y="5" width="3" height="1"/><rect x="11" y="8" width="3" height="1"/><rect x="11" y="11" width="3" height="1"/></g><rect x="3" y="0" width="8" height="14" fill="#4d7de6"/><rect x="4" y="1" width="6" height="12" fill="#84a6ee"/><rect x="4" y="1" width="6" height="1" fill="#d2ddf8"/><rect x="4" y="1" width="1" height="12" fill="#d2ddf8"/></svg>
<div class="t" style="left:42.80px;top:378px;font-size:11.5px;line-height:18px;height:18px;transform:scaleX(0.9159)">R211</div>
<div class="t" style="left:135.90px;top:378px;font-size:11.5px;line-height:18px;height:18px;transform:scaleX(0.9358)">CMP-009-00157-3[Resistor 1K +/-5 % 0402 63 ...</div>
<div class="t" style="left:379.50px;top:378px;font-size:11.5px;line-height:18px;height:18px;transform:scaleX(0.9404)">24_usb_mux.SchDoc</div>
<div class="t" style="left:508.60px;top:378px;font-size:11.5px;line-height:18px;height:18px;transform:scaleX(0.9280)">CMP-009-00...</div>
<div class="t" style="left:586.80px;top:378px;font-size:11.5px;line-height:18px;height:18px;transform:scaleX(0.9438)">Resistor 1K +...</div>
<div class="ck" style="left:668px;top:381px"></div>
<div class="t" style="left:683.80px;top:379px;font-size:11.5px;line-height:18px;height:18px;transform:scaleX(1.0192)">Draft</div>
<div class="t" style="left:746.00px;top:378px;font-size:11.5px;line-height:18px;height:18px;transform:scaleX(1.0136)">Up to date</div>
<div class="t" style="left:824.10px;top:378px;font-size:11.5px;line-height:18px;height:18px;transform:scaleX(0.9596)">Company W...</div>
<div class="a" style="left:17px;top:415px;width:1451px;height:1px;background:#353535"></div>
<svg class="ic" style="left:22px;top:399px" width="15" height="14" viewBox="0 0 15 14"><g fill="#bdb9ae"><rect x="0" y="2" width="3" height="1"/><rect x="0" y="5" width="3" height="1"/><rect x="0" y="8" width="3" height="1"/><rect x="0" y="11" width="3" height="1"/><rect x="11" y="2" width="3" height="1"/><rect x="11" y="5" width="3" height="1"/><rect x="11" y="8" width="3" height="1"/><rect x="11" y="11" width="3" height="1"/></g><rect x="3" y="0" width="8" height="14" fill="#4d7de6"/><rect x="4" y="1" width="6" height="12" fill="#84a6ee"/><rect x="4" y="1" width="6" height="1" fill="#d2ddf8"/><rect x="4" y="1" width="1" height="12" fill="#d2ddf8"/></svg>
<div class="t" style="left:42.80px;top:397px;font-size:11.5px;line-height:18px;height:18px;transform:scaleX(0.8873)">R212</div>
<div class="t" style="left:135.90px;top:397px;font-size:11.5px;line-height:18px;height:18px;transform:scaleX(0.9479)">CMP-009-00168-3[Resistor 100K +/-1 % 0402 ...</div>
<div class="t" style="left:379.50px;top:397px;font-size:11.5px;line-height:18px;height:18px;transform:scaleX(0.9404)">24_usb_mux.SchDoc</div>
<div class="t" style="left:508.60px;top:397px;font-size:11.5px;line-height:18px;height:18px;transform:scaleX(0.9280)">CMP-009-00...</div>
<div class="t" style="left:586.80px;top:397px;font-size:11.5px;line-height:18px;height:18px;transform:scaleX(0.9426)">Resistor 100...</div>
<div class="ck" style="left:668px;top:400px"></div>
<div class="t" style="left:683.80px;top:398px;font-size:11.5px;line-height:18px;height:18px;transform:scaleX(1.0192)">Draft</div>
<div class="t" style="left:746.00px;top:397px;font-size:11.5px;line-height:18px;height:18px;transform:scaleX(1.0136)">Up to date</div>
<div class="t" style="left:824.10px;top:397px;font-size:11.5px;line-height:18px;height:18px;transform:scaleX(0.9596)">Company W...</div>
<div class="a" style="left:17px;top:434px;width:1451px;height:1px;background:#353535"></div>
<svg class="ic" style="left:22px;top:418px" width="15" height="14" viewBox="0 0 15 14"><g fill="#bdb9ae"><rect x="0" y="2" width="3" height="1"/><rect x="0" y="5" width="3" height="1"/><rect x="0" y="8" width="3" height="1"/><rect x="0" y="11" width="3" height="1"/><rect x="11" y="2" width="3" height="1"/><rect x="11" y="5" width="3" height="1"/><rect x="11" y="8" width="3" height="1"/><rect x="11" y="11" width="3" height="1"/></g><rect x="3" y="0" width="8" height="14" fill="#4d7de6"/><rect x="4" y="1" width="6" height="12" fill="#84a6ee"/><rect x="4" y="1" width="6" height="1" fill="#d2ddf8"/><rect x="4" y="1" width="1" height="12" fill="#d2ddf8"/></svg>
<div class="t" style="left:42.80px;top:416px;font-size:11.5px;line-height:18px;height:18px;transform:scaleX(0.8873)">R213</div>
<div class="t" style="left:135.90px;top:416px;font-size:11.5px;line-height:18px;height:18px;transform:scaleX(0.9457)">CMP-009-00149-3[Resistor 10K&nbsp; +/-1 % 0402 6...</div>
<div class="t" style="left:379.50px;top:416px;font-size:11.5px;line-height:18px;height:18px;transform:scaleX(0.9580)">25_usb-a_conn.SchDoc</div>
<div class="t" style="left:508.60px;top:416px;font-size:11.5px;line-height:18px;height:18px;transform:scaleX(0.9280)">CMP-009-00...</div>
<div class="t" style="left:586.80px;top:416px;font-size:11.5px;line-height:18px;height:18px;transform:scaleX(0.9297)">Resistor 10K ...</div>
<div class="ck" style="left:668px;top:419px"></div>
<div class="t" style="left:683.80px;top:417px;font-size:11.5px;line-height:18px;height:18px;transform:scaleX(1.0192)">Draft</div>
<div class="t" style="left:746.00px;top:416px;font-size:11.5px;line-height:18px;height:18px;transform:scaleX(1.0136)">Up to date</div>
<div class="t" style="left:824.10px;top:416px;font-size:11.5px;line-height:18px;height:18px;transform:scaleX(0.9596)">Company W...</div>
<div class="a" style="left:17px;top:453px;width:1451px;height:1px;background:#353535"></div>
<svg class="ic" style="left:22px;top:437px" width="15" height="14" viewBox="0 0 15 14"><g fill="#bdb9ae"><rect x="0" y="2" width="3" height="1"/><rect x="0" y="5" width="3" height="1"/><rect x="0" y="8" width="3" height="1"/><rect x="0" y="11" width="3" height="1"/><rect x="11" y="2" width="3" height="1"/><rect x="11" y="5" width="3" height="1"/><rect x="11" y="8" width="3" height="1"/><rect x="11" y="11" width="3" height="1"/></g><rect x="3" y="0" width="8" height="14" fill="#4d7de6"/><rect x="4" y="1" width="6" height="12" fill="#84a6ee"/><rect x="4" y="1" width="6" height="1" fill="#d2ddf8"/><rect x="4" y="1" width="1" height="12" fill="#d2ddf8"/></svg>
<div class="t" style="left:42.80px;top:435px;font-size:11.5px;line-height:18px;height:18px;transform:scaleX(0.8873)">R214</div>
<div class="t" style="left:135.90px;top:435px;font-size:11.5px;line-height:18px;height:18px;transform:scaleX(0.9457)">CMP-009-00149-3[Resistor 10K&nbsp; +/-1 % 0402 6...</div>
<div class="t" style="left:379.50px;top:435px;font-size:11.5px;line-height:18px;height:18px;transform:scaleX(0.9580)">25_usb-a_conn.SchDoc</div>
<div class="t" style="left:508.60px;top:435px;font-size:11.5px;line-height:18px;height:18px;transform:scaleX(0.9280)">CMP-009-00...</div>
<div class="t" style="left:586.80px;top:435px;font-size:11.5px;line-height:18px;height:18px;transform:scaleX(0.9297)">Resistor 10K ...</div>
<div class="ck" style="left:668px;top:438px"></div>
<div class="t" style="left:683.80px;top:436px;font-size:11.5px;line-height:18px;height:18px;transform:scaleX(1.0192)">Draft</div>
<div class="t" style="left:746.00px;top:435px;font-size:11.5px;line-height:18px;height:18px;transform:scaleX(1.0136)">Up to date</div>
<div class="t" style="left:824.10px;top:435px;font-size:11.5px;line-height:18px;height:18px;transform:scaleX(0.9596)">Company W...</div>
<div class="a" style="left:17px;top:472px;width:1451px;height:1px;background:#353535"></div>
<svg class="ic" style="left:22px;top:456px" width="15" height="14" viewBox="0 0 15 14"><g fill="#bdb9ae"><rect x="0" y="2" width="3" height="1"/><rect x="0" y="5" width="3" height="1"/><rect x="0" y="8" width="3" height="1"/><rect x="0" y="11" width="3" height="1"/><rect x="11" y="2" width="3" height="1"/><rect x="11" y="5" width="3" height="1"/><rect x="11" y="8" width="3" height="1"/><rect x="11" y="11" width="3" height="1"/></g><rect x="3" y="0" width="8" height="14" fill="#4d7de6"/><rect x="4" y="1" width="6" height="12" fill="#84a6ee"/><rect x="4" y="1" width="6" height="1" fill="#d2ddf8"/><rect x="4" y="1" width="1" height="12" fill="#d2ddf8"/></svg>
<div class="t" style="left:42.80px;top:454px;font-size:11.5px;line-height:18px;height:18px;transform:scaleX(0.8873)">R215</div>
<div class="t" style="left:135.90px;top:454px;font-size:11.5px;line-height:18px;height:18px;transform:scaleX(0.9479)">CMP-009-00159-3[Resistor 44K2 +/-1 % 0402 ...</div>
<div class="t" style="left:379.50px;top:454px;font-size:11.5px;line-height:18px;height:18px;transform:scaleX(0.9580)">25_usb-a_conn.SchDoc</div>
<div class="t" style="left:508.60px;top:454px;font-size:11.5px;line-height:18px;height:18px;transform:scaleX(0.9280)">CMP-009-00...</div>
<div class="t" style="left:586.80px;top:454px;font-size:11.5px;line-height:18px;height:18px;transform:scaleX(0.9281)">Resistor 44K...</div>
<div class="ck" style="left:668px;top:457px"></div>
<div class="t" style="left:683.80px;top:455px;font-size:11.5px;line-height:18px;height:18px;transform:scaleX(1.0192)">Draft</div>
<div class="t" style="left:746.00px;top:454px;font-size:11.5px;line-height:18px;height:18px;transform:scaleX(1.0136)">Up to date</div>
<div class="t" style="left:824.10px;top:454px;font-size:11.5px;line-height:18px;height:18px;transform:scaleX(0.9596)">Company W...</div>
<div class="a" style="left:17px;top:491px;width:1451px;height:1px;background:#353535"></div>
<svg class="ic" style="left:22px;top:475px" width="15" height="14" viewBox="0 0 15 14"><g fill="#bdb9ae"><rect x="0" y="2" width="3" height="1"/><rect x="0" y="5" width="3" height="1"/><rect x="0" y="8" width="3" height="1"/><rect x="0" y="11" width="3" height="1"/><rect x="11" y="2" width="3" height="1"/><rect x="11" y="5" width="3" height="1"/><rect x="11" y="8" width="3" height="1"/><rect x="11" y="11" width="3" height="1"/></g><rect x="3" y="0" width="8" height="14" fill="#4d7de6"/><rect x="4" y="1" width="6" height="12" fill="#84a6ee"/><rect x="4" y="1" width="6" height="1" fill="#d2ddf8"/><rect x="4" y="1" width="1" height="12" fill="#d2ddf8"/></svg>
<div class="t" style="left:42.80px;top:473px;font-size:11.5px;line-height:18px;height:18px;transform:scaleX(0.8873)">R216</div>
<div class="t" style="left:135.90px;top:473px;font-size:11.5px;line-height:18px;height:18px;transform:scaleX(0.9457)">CMP-009-00149-3[Resistor 10K&nbsp; +/-1 % 0402 6...</div>
<div class="t" style="left:379.50px;top:473px;font-size:11.5px;line-height:18px;height:18px;transform:scaleX(0.9580)">25_usb-a_conn.SchDoc</div>
<div class="t" style="left:508.60px;top:473px;font-size:11.5px;line-height:18px;height:18px;transform:scaleX(0.9280)">CMP-009-00...</div>
<div class="t" style="left:586.80px;top:473px;font-size:11.5px;line-height:18px;height:18px;transform:scaleX(0.9297)">Resistor 10K ...</div>
<div class="ck" style="left:668px;top:476px"></div>
<div class="t" style="left:683.80px;top:474px;font-size:11.5px;line-height:18px;height:18px;transform:scaleX(1.0192)">Draft</div>
<div class="t" style="left:746.00px;top:473px;font-size:11.5px;line-height:18px;height:18px;transform:scaleX(1.0136)">Up to date</div>
<div class="t" style="left:824.10px;top:473px;font-size:11.5px;line-height:18px;height:18px;transform:scaleX(0.9596)">Company W...</div>
<div class="a" style="left:17px;top:510px;width:1451px;height:1px;background:#353535"></div>
<svg class="ic" style="left:22px;top:494px" width="15" height="14" viewBox="0 0 15 14"><g fill="#bdb9ae"><rect x="0" y="2" width="3" height="1"/><rect x="0" y="5" width="3" height="1"/><rect x="0" y="8" width="3" height="1"/><rect x="0" y="11" width="3" height="1"/><rect x="11" y="2" width="3" height="1"/><rect x="11" y="5" width="3" height="1"/><rect x="11" y="8" width="3" height="1"/><rect x="11" y="11" width="3" height="1"/></g><rect x="3" y="0" width="8" height="14" fill="#4d7de6"/><rect x="4" y="1" width="6" height="12" fill="#84a6ee"/><rect x="4" y="1" width="6" height="1" fill="#d2ddf8"/><rect x="4" y="1" width="1" height="12" fill="#d2ddf8"/></svg>
<div class="t" style="left:42.80px;top:492px;font-size:11.5px;line-height:18px;height:18px;transform:scaleX(0.8873)">R217</div>
<div class="t" style="left:135.90px;top:492px;font-size:11.5px;line-height:18px;height:18px;transform:scaleX(0.9457)">CMP-009-00149-3[Resistor 10K&nbsp; +/-1 % 0402 6...</div>
<div class="t" style="left:379.50px;top:492px;font-size:11.5px;line-height:18px;height:18px;transform:scaleX(0.9580)">25_usb-a_conn.SchDoc</div>
<div class="t" style="left:508.60px;top:492px;font-size:11.5px;line-height:18px;height:18px;transform:scaleX(0.9280)">CMP-009-00...</div>
<div class="t" style="left:586.80px;top:492px;font-size:11.5px;line-height:18px;height:18px;transform:scaleX(0.9297)">Resistor 10K ...</div>
<div class="ck" style="left:668px;top:495px"></div>
<div class="t" style="left:683.80px;top:493px;font-size:11.5px;line-height:18px;height:18px;transform:scaleX(1.0192)">Draft</div>
<div class="t" style="left:746.00px;top:492px;font-size:11.5px;line-height:18px;height:18px;transform:scaleX(1.0136)">Up to date</div>
<div class="t" style="left:824.10px;top:492px;font-size:11.5px;line-height:18px;height:18px;transform:scaleX(0.9596)">Company W...</div>
<div class="a" style="left:17px;top:529px;width:1451px;height:1px;background:#353535"></div>
<svg class="ic" style="left:22px;top:513px" width="15" height="14" viewBox="0 0 15 14"><g fill="#bdb9ae"><rect x="0" y="2" width="3" height="1"/><rect x="0" y="5" width="3" height="1"/><rect x="0" y="8" width="3" height="1"/><rect x="0" y="11" width="3" height="1"/><rect x="11" y="2" width="3" height="1"/><rect x="11" y="5" width="3" height="1"/><rect x="11" y="8" width="3" height="1"/><rect x="11" y="11" width="3" height="1"/></g><rect x="3" y="0" width="8" height="14" fill="#4d7de6"/><rect x="4" y="1" width="6" height="12" fill="#84a6ee"/><rect x="4" y="1" width="6" height="1" fill="#d2ddf8"/><rect x="4" y="1" width="1" height="12" fill="#d2ddf8"/></svg>
<div class="t" style="left:42.80px;top:511px;font-size:11.5px;line-height:18px;height:18px;transform:scaleX(0.8873)">R218</div>
<div class="t" style="left:135.90px;top:511px;font-size:11.5px;line-height:18px;height:18px;transform:scaleX(0.9457)">CMP-009-00149-3[Resistor 10K&nbsp; +/-1 % 0402 6...</div>
<div class="t" style="left:379.50px;top:511px;font-size:11.5px;line-height:18px;height:18px;transform:scaleX(0.9580)">25_usb-a_conn.SchDoc</div>
<div class="t" style="left:508.60px;top:511px;font-size:11.5px;line-height:18px;height:18px;transform:scaleX(0.9280)">CMP-009-00...</div>
<div class="t" style="left:586.80px;top:511px;font-size:11.5px;line-height:18px;height:18px;transform:scaleX(0.9297)">Resistor 10K ...</div>
<div class="ck" style="left:668px;top:514px"></div>
<div class="t" style="left:683.80px;top:512px;font-size:11.5px;line-height:18px;height:18px;transform:scaleX(1.0192)">Draft</div>
<div class="t" style="left:746.00px;top:511px;font-size:11.5px;line-height:18px;height:18px;transform:scaleX(1.0136)">Up to date</div>
<div class="t" style="left:824.10px;top:511px;font-size:11.5px;line-height:18px;height:18px;transform:scaleX(0.9596)">Company W...</div>
<div class="a" style="left:17px;top:548px;width:1451px;height:1px;background:#353535"></div>
<svg class="ic" style="left:22px;top:532px" width="15" height="14" viewBox="0 0 15 14"><g fill="#bdb9ae"><rect x="0" y="2" width="3" height="1"/><rect x="0" y="5" width="3" height="1"/><rect x="0" y="8" width="3" height="1"/><rect x="0" y="11" width="3" height="1"/><rect x="11" y="2" width="3" height="1"/><rect x="11" y="5" width="3" height="1"/><rect x="11" y="8" width="3" height="1"/><rect x="11" y="11" width="3" height="1"/></g><rect x="3" y="0" width="8" height="14" fill="#4d7de6"/><rect x="4" y="1" width="6" height="12" fill="#84a6ee"/><rect x="4" y="1" width="6" height="1" fill="#d2ddf8"/><rect x="4" y="1" width="1" height="12" fill="#d2ddf8"/></svg>
<div class="t" style="left:42.80px;top:530px;font-size:11.5px;line-height:18px;height:18px;transform:scaleX(0.8873)">R219</div>
<div class="t" style="left:135.90px;top:530px;font-size:11.5px;line-height:18px;height:18px;transform:scaleX(0.9479)">CMP-009-00159-3[Resistor 44K2 +/-1 % 0402 ...</div>
<div class="t" style="left:379.50px;top:530px;font-size:11.5px;line-height:18px;height:18px;transform:scaleX(0.9580)">25_usb-a_conn.SchDoc</div>
<div class="t" style="left:508.60px;top:530px;font-size:11.5px;line-height:18px;height:18px;transform:scaleX(0.9280)">CMP-009-00...</div>
<div class="t" style="left:586.80px;top:530px;font-size:11.5px;line-height:18px;height:18px;transform:scaleX(0.9281)">Resistor 44K...</div>
<div class="ck" style="left:668px;top:533px"></div>
<div class="t" style="left:683.80px;top:531px;font-size:11.5px;line-height:18px;height:18px;transform:scaleX(1.0192)">Draft</div>
<div class="t" style="left:746.00px;top:530px;font-size:11.5px;line-height:18px;height:18px;transform:scaleX(1.0136)">Up to date</div>
<div class="t" style="left:824.10px;top:530px;font-size:11.5px;line-height:18px;height:18px;transform:scaleX(0.9596)">Company W...</div>
<div class="a" style="left:17px;top:567px;width:1451px;height:1px;background:#353535"></div>
<svg class="ic" style="left:22px;top:551px" width="15" height="14" viewBox="0 0 15 14"><g fill="#bdb9ae"><rect x="0" y="2" width="3" height="1"/><rect x="0" y="5" width="3" height="1"/><rect x="0" y="8" width="3" height="1"/><rect x="0" y="11" width="3" height="1"/><rect x="11" y="2" width="3" height="1"/><rect x="11" y="5" width="3" height="1"/><rect x="11" y="8" width="3" height="1"/><rect x="11" y="11" width="3" height="1"/></g><rect x="3" y="0" width="8" height="14" fill="#4d7de6"/><rect x="4" y="1" width="6" height="12" fill="#84a6ee"/><rect x="4" y="1" width="6" height="1" fill="#d2ddf8"/><rect x="4" y="1" width="1" height="12" fill="#d2ddf8"/></svg>
<div class="t" style="left:42.80px;top:549px;font-size:11.5px;line-height:18px;height:18px;transform:scaleX(0.9238)">R22</div>
<div class="t" style="left:135.90px;top:549px;font-size:11.5px;line-height:18px;height:18px;transform:scaleX(0.9479)">CMP-009-00154-3[Resistor 43K2 +/-1 % 0402 ...</div>
<div class="t" style="left:379.50px;top:549px;font-size:11.5px;line-height:18px;height:18px;transform:scaleX(0.9151)">5_dc-dc_vcc5m-vcc3m....</div>
<div class="t" style="left:508.60px;top:549px;font-size:11.5px;line-height:18px;height:18px;transform:scaleX(0.9280)">CMP-009-00...</div>
<div class="t" style="left:586.80px;top:549px;font-size:11.5px;line-height:18px;height:18px;transform:scaleX(0.9281)">Resistor 43K...</div>
<div class="ck" style="left:668px;top:552px"></div>
<div class="t" style="left:683.80px;top:550px;font-size:11.5px;line-height:18px;height:18px;transform:scaleX(1.0192)">Draft</div>
<div class="t" style="left:746.00px;top:549px;font-size:11.5px;line-height:18px;height:18px;transform:scaleX(1.0136)">Up to date</div>
<div class="t" style="left:824.10px;top:549px;font-size:11.5px;line-height:18px;height:18px;transform:scaleX(0.9596)">Company W...</div>
<div class="a" style="left:17px;top:586px;width:1451px;height:1px;background:#353535"></div>
<svg class="ic" style="left:22px;top:570px" width="15" height="14" viewBox="0 0 15 14"><g fill="#bdb9ae"><rect x="0" y="2" width="3" height="1"/><rect x="0" y="5" width="3" height="1"/><rect x="0" y="8" width="3" height="1"/><rect x="0" y="11" width="3" height="1"/><rect x="11" y="2" width="3" height="1"/><rect x="11" y="5" width="3" height="1"/><rect x="11" y="8" width="3" height="1"/><rect x="11" y="11" width="3" height="1"/></g><rect x="3" y="0" width="8" height="14" fill="#4d7de6"/><rect x="4" y="1" width="6" height="12" fill="#84a6ee"/><rect x="4" y="1" width="6" height="1" fill="#d2ddf8"/><rect x="4" y="1" width="1" height="12" fill="#d2ddf8"/></svg>
<div class="t" style="left:42.80px;top:568px;font-size:11.5px;line-height:18px;height:18px;transform:scaleX(0.8873)">R220</div>
<div class="t" style="left:135.90px;top:568px;font-size:11.5px;line-height:18px;height:18px;transform:scaleX(0.9457)">CMP-009-00149-3[Resistor 10K&nbsp; +/-1 % 0402 6...</div>
<div class="t" style="left:379.50px;top:568px;font-size:11.5px;line-height:18px;height:18px;transform:scaleX(0.9580)">25_usb-a_conn.SchDoc</div>
<div class="t" style="left:508.60px;top:568px;font-size:11.5px;line-height:18px;height:18px;transform:scaleX(0.9280)">CMP-009-00...</div>
<div class="t" style="left:586.80px;top:568px;font-size:11.5px;line-height:18px;height:18px;transform:scaleX(0.9297)">Resistor 10K ...</div>
<div class="ck" style="left:668px;top:571px"></div>
<div class="t" style="left:683.80px;top:569px;font-size:11.5px;line-height:18px;height:18px;transform:scaleX(1.0192)">Draft</div>
<div class="t" style="left:746.00px;top:568px;font-size:11.5px;line-height:18px;height:18px;transform:scaleX(1.0136)">Up to date</div>
<div class="t" style="left:824.10px;top:568px;font-size:11.5px;line-height:18px;height:18px;transform:scaleX(0.9596)">Company W...</div>
<div class="a" style="left:17px;top:605px;width:1451px;height:1px;background:#353535"></div>
<svg class="ic" style="left:22px;top:589px" width="15" height="14" viewBox="0 0 15 14"><g fill="#bdb9ae"><rect x="0" y="2" width="3" height="1"/><rect x="0" y="5" width="3" height="1"/><rect x="0" y="8" width="3" height="1"/><rect x="0" y="11" width="3" height="1"/><rect x="11" y="2" width="3" height="1"/><rect x="11" y="5" width="3" height="1"/><rect x="11" y="8" width="3" height="1"/><rect x="11" y="11" width="3" height="1"/></g><rect x="3" y="0" width="8" height="14" fill="#4d7de6"/><rect x="4" y="1" width="6" height="12" fill="#84a6ee"/><rect x="4" y="1" width="6" height="1" fill="#d2ddf8"/><rect x="4" y="1" width="1" height="12" fill="#d2ddf8"/></svg>
<div class="t" style="left:42.80px;top:587px;font-size:11.5px;line-height:18px;height:18px;transform:scaleX(0.8873)">R221</div>
<div class="t" style="left:135.90px;top:587px;font-size:11.5px;line-height:18px;height:18px;transform:scaleX(0.9380)">CMP-009-00148-3[Jumper 0402]</div>
<div class="t" style="left:379.50px;top:587px;font-size:11.5px;line-height:18px;height:18px;transform:scaleX(0.9357)">26_spi_mux.SchDoc</div>
<div class="t" style="left:508.60px;top:587px;font-size:11.5px;line-height:18px;height:18px;transform:scaleX(0.9280)">CMP-009-00...</div>
<div class="t" style="left:586.80px;top:587px;font-size:11.5px;line-height:18px;height:18px;transform:scaleX(0.9460)">Jumper 0402</div>
<div class="ck" style="left:668px;top:590px"></div>
<div class="t" style="left:683.80px;top:588px;font-size:11.5px;line-height:18px;height:18px;transform:scaleX(1.0192)">Draft</div>
<div class="t" style="left:746.00px;top:587px;font-size:11.5px;line-height:18px;height:18px;transform:scaleX(1.0136)">Up to date</div>
<div class="t" style="left:824.10px;top:587px;font-size:11.5px;line-height:18px;height:18px;transform:scaleX(0.9596)">Company W...</div>
<div class="a" style="left:17px;top:624px;width:1451px;height:1px;background:#353535"></div>
<svg class="ic" style="left:22px;top:608px" width="15" height="14" viewBox="0 0 15 14"><g fill="#bdb9ae"><rect x="0" y="2" width="3" height="1"/><rect x="0" y="5" width="3" height="1"/><rect x="0" y="8" width="3" height="1"/><rect x="0" y="11" width="3" height="1"/><rect x="11" y="2" width="3" height="1"/><rect x="11" y="5" width="3" height="1"/><rect x="11" y="8" width="3" height="1"/><rect x="11" y="11" width="3" height="1"/></g><rect x="3" y="0" width="8" height="14" fill="#4d7de6"/><rect x="4" y="1" width="6" height="12" fill="#84a6ee"/><rect x="4" y="1" width="6" height="1" fill="#d2ddf8"/><rect x="4" y="1" width="1" height="12" fill="#d2ddf8"/></svg>
<div class="t" style="left:42.80px;top:606px;font-size:11.5px;line-height:18px;height:18px;transform:scaleX(0.8873)">R222</div>
<div class="t" style="left:135.90px;top:606px;font-size:11.5px;line-height:18px;height:18px;transform:scaleX(0.9380)">CMP-009-00148-3[Jumper 0402]</div>
<div class="t" style="left:379.50px;top:606px;font-size:11.5px;line-height:18px;height:18px;transform:scaleX(0.9357)">26_spi_mux.SchDoc</div>
<div class="t" style="left:508.60px;top:606px;font-size:11.5px;line-height:18px;height:18px;transform:scaleX(0.9280)">CMP-009-00...</div>
<div class="t" style="left:586.80px;top:606px;font-size:11.5px;line-height:18px;height:18px;transform:scaleX(0.9460)">Jumper 0402</div>
<div class="ck" style="left:668px;top:609px"></div>
<div class="t" style="left:683.80px;top:607px;font-size:11.5px;line-height:18px;height:18px;transform:scaleX(1.0192)">Draft</div>
<div class="t" style="left:746.00px;top:606px;font-size:11.5px;line-height:18px;height:18px;transform:scaleX(1.0136)">Up to date</div>
<div class="t" style="left:824.10px;top:606px;font-size:11.5px;line-height:18px;height:18px;transform:scaleX(0.9596)">Company W...</div>
<div class="a" style="left:17px;top:643px;width:1451px;height:1px;background:#353535"></div>
<svg class="ic" style="left:22px;top:627px" width="15" height="14" viewBox="0 0 15 14"><g fill="#bdb9ae"><rect x="0" y="2" width="3" height="1"/><rect x="0" y="5" width="3" height="1"/><rect x="0" y="8" width="3" height="1"/><rect x="0" y="11" width="3" height="1"/><rect x="11" y="2" width="3" height="1"/><rect x="11" y="5" width="3" height="1"/><rect x="11" y="8" width="3" height="1"/><rect x="11" y="11" width="3" height="1"/></g><rect x="3" y="0" width="8" height="14" fill="#4d7de6"/><rect x="4" y="1" width="6" height="12" fill="#84a6ee"/><rect x="4" y="1" width="6" height="1" fill="#d2ddf8"/><rect x="4" y="1" width="1" height="12" fill="#d2ddf8"/></svg>
<div class="t" style="left:42.80px;top:625px;font-size:11.5px;line-height:18px;height:18px;transform:scaleX(0.8873)">R223</div>
<div class="t" style="left:135.90px;top:625px;font-size:11.5px;line-height:18px;height:18px;transform:scaleX(0.9380)">CMP-009-00148-3[Jumper 0402]</div>
<div class="t" style="left:379.50px;top:625px;font-size:11.5px;line-height:18px;height:18px;transform:scaleX(0.9357)">26_spi_mux.SchDoc</div>
<div class="t" style="left:508.60px;top:625px;font-size:11.5px;line-height:18px;height:18px;transform:scaleX(0.9280)">CMP-009-00...</div>
<div class="t" style="left:586.80px;top:625px;font-size:11.5px;line-height:18px;height:18px;transform:scaleX(0.9460)">Jumper 0402</div>
<div class="ck" style="left:668px;top:628px"></div>
<div class="t" style="left:683.80px;top:626px;font-size:11.5px;line-height:18px;height:18px;transform:scaleX(1.0192)">Draft</div>
<div class="t" style="left:746.00px;top:625px;font-size:11.5px;line-height:18px;height:18px;transform:scaleX(1.0136)">Up to date</div>
<div class="t" style="left:824.10px;top:625px;font-size:11.5px;line-height:18px;height:18px;transform:scaleX(0.9596)">Company W...</div>
<div class="a" style="left:17px;top:662px;width:1451px;height:1px;background:#353535"></div>
<svg class="ic" style="left:22px;top:646px" width="15" height="14" viewBox="0 0 15 14"><g fill="#bdb9ae"><rect x="0" y="2" width="3" height="1"/><rect x="0" y="5" width="3" height="1"/><rect x="0" y="8" width="3" height="1"/><rect x="0" y="11" width="3" height="1"/><rect x="11" y="2" width="3" height="1"/><rect x="11" y="5" width="3" height="1"/><rect x="11" y="8" width="3" height="1"/><rect x="11" y="11" width="3" height="1"/></g><rect x="3" y="0" width="8" height="14" fill="#4d7de6"/><rect x="4" y="1" width="6" height="12" fill="#84a6ee"/><rect x="4" y="1" width="6" height="1" fill="#d2ddf8"/><rect x="4" y="1" width="1" height="12" fill="#d2ddf8"/></svg>
<div class="t" style="left:42.80px;top:644px;font-size:11.5px;line-height:18px;height:18px;transform:scaleX(0.8873)">R224</div>
<div class="t" style="left:135.90px;top:644px;font-size:11.5px;line-height:18px;height:18px;transform:scaleX(0.9479)">CMP-009-00168-3[Resistor 100K +/-1 % 0402 ...</div>
<div class="t" style="left:379.50px;top:644px;font-size:11.5px;line-height:18px;height:18px;transform:scaleX(0.9225)">27_exp_1.SchDoc</div>
<div class="t" style="left:508.60px;top:644px;font-size:11.5px;line-height:18px;height:18px;transform:scaleX(0.9280)">CMP-009-00...</div>
<div class="t" style="left:586.80px;top:644px;font-size:11.5px;line-height:18px;height:18px;transform:scaleX(0.9426)">Resistor 100...</div>
<div class="ck" style="left:668px;top:647px"></div>
<div class="t" style="left:683.80px;top:645px;font-size:11.5px;line-height:18px;height:18px;transform:scaleX(1.0192)">Draft</div>
<div class="t" style="left:746.00px;top:644px;font-size:11.5px;line-height:18px;height:18px;transform:scaleX(1.0136)">Up to date</div>
<div class="t" style="left:824.10px;top:644px;font-size:11.5px;line-height:18px;height:18px;transform:scaleX(0.9596)">Company W...</div>
<div class="a" style="left:17px;top:681px;width:1451px;height:1px;background:#353535"></div>
<svg class="ic" style="left:22px;top:665px" width="15" height="14" viewBox="0 0 15 14"><g fill="#bdb9ae"><rect x="0" y="2" width="3" height="1"/><rect x="0" y="5" width="3" height="1"/><rect x="0" y="8" width="3" height="1"/><rect x="0" y="11" width="3" height="1"/><rect x="11" y="2" width="3" height="1"/><rect x="11" y="5" width="3" height="1"/><rect x="11" y="8" width="3" height="1"/><rect x="11" y="11" width="3" height="1"/></g><rect x="3" y="0" width="8" height="14" fill="#4d7de6"/><rect x="4" y="1" width="6" height="12" fill="#84a6ee"/><rect x="4" y="1" width="6" height="1" fill="#d2ddf8"/><rect x="4" y="1" width="1" height="12" fill="#d2ddf8"/></svg>
<div class="t" style="left:42.80px;top:663px;font-size:11.5px;line-height:18px;height:18px;transform:scaleX(0.8873)">R225</div>
<div class="t" style="left:135.90px;top:663px;font-size:11.5px;line-height:18px;height:18px;transform:scaleX(0.9479)">CMP-009-00124-3[Resistor 53K6 +/-1 % 0402 ...</div>
<div class="t" style="left:379.50px;top:663px;font-size:11.5px;line-height:18px;height:18px;transform:scaleX(0.9225)">27_exp_1.SchDoc</div>
<div class="t" style="left:508.60px;top:663px;font-size:11.5px;line-height:18px;height:18px;transform:scaleX(0.9280)">CMP-009-00...</div>
<div class="t" style="left:586.80px;top:663px;font-size:11.5px;line-height:18px;height:18px;transform:scaleX(0.9281)">Resistor 53K...</div>
<div class="ck" style="left:668px;top:666px"></div>
<div class="t" style="left:683.80px;top:664px;font-size:11.5px;line-height:18px;height:18px;transform:scaleX(1.0192)">Draft</div>
<div class="t" style="left:746.00px;top:663px;font-size:11.5px;line-height:18px;height:18px;transform:scaleX(1.0136)">Up to date</div>
<div class="t" style="left:824.10px;top:663px;font-size:11.5px;line-height:18px;height:18px;transform:scaleX(0.9596)">Company W...</div>
<div class="a" style="left:17px;top:700px;width:1451px;height:1px;background:#353535"></div>
<svg class="ic" style="left:22px;top:684px" width="15" height="14" viewBox="0 0 15 14"><g fill="#bdb9ae"><rect x="0" y="2" width="3" height="1"/><rect x="0" y="5" width="3" height="1"/><rect x="0" y="8" width="3" height="1"/><rect x="0" y="11" width="3" height="1"/><rect x="11" y="2" width="3" height="1"/><rect x="11" y="5" width="3" height="1"/><rect x="11" y="8" width="3" height="1"/><rect x="11" y="11" width="3" height="1"/></g><rect x="3" y="0" width="8" height="14" fill="#4d7de6"/><rect x="4" y="1" width="6" height="12" fill="#84a6ee"/><rect x="4" y="1" width="6" height="1" fill="#d2ddf8"/><rect x="4" y="1" width="1" height="12" fill="#d2ddf8"/></svg>
<div class="t" style="left:42.80px;top:682px;font-size:11.5px;line-height:18px;height:18px;transform:scaleX(0.8873)">R226</div>
<div class="t" style="left:135.90px;top:682px;font-size:11.5px;line-height:18px;height:18px;transform:scaleX(0.9506)">CMP-009-00165-3[Resistor 1M +/-1 % 0402 63...</div>
<div class="t" style="left:379.50px;top:682px;font-size:11.5px;line-height:18px;height:18px;transform:scaleX(0.9225)">27_exp_1.SchDoc</div>
<div class="t" style="left:508.60px;top:682px;font-size:11.5px;line-height:18px;height:18px;transform:scaleX(0.9280)">CMP-009-00...</div>
<div class="t" style="left:586.80px;top:682px;font-size:11.5px;line-height:18px;height:18px;transform:scaleX(0.9509)">Resistor 1M ...</div>
<div class="ck" style="left:668px;top:685px"></div>
<div class="t" style="left:683.80px;top:683px;font-size:11.5px;line-height:18px;height:18px;transform:scaleX(1.0192)">Draft</div>
<div class="t" style="left:746.00px;top:682px;font-size:11.5px;line-height:18px;height:18px;transform:scaleX(1.0136)">Up to date</div>
<div class="t" style="left:824.10px;top:682px;font-size:11.5px;line-height:18px;height:18px;transform:scaleX(0.9596)">Company W...</div>
<div class="a" style="left:17px;top:719px;width:1451px;height:1px;background:#353535"></div>
<svg class="ic" style="left:22px;top:703px" width="15" height="14" viewBox="0 0 15 14"><g fill="#bdb9ae"><rect x="0" y="2" width="3" height="1"/><rect x="0" y="5" width="3" height="1"/><rect x="0" y="8" width="3" height="1"/><rect x="0" y="11" width="3" height="1"/><rect x="11" y="2" width="3" height="1"/><rect x="11" y="5" width="3" height="1"/><rect x="11" y="8" width="3" height="1"/><rect x="11" y="11" width="3" height="1"/></g><rect x="3" y="0" width="8" height="14" fill="#4d7de6"/><rect x="4" y="1" width="6" height="12" fill="#84a6ee"/><rect x="4" y="1" width="6" height="1" fill="#d2ddf8"/><rect x="4" y="1" width="1" height="12" fill="#d2ddf8"/></svg>
<div class="t" style="left:42.80px;top:701px;font-size:11.5px;line-height:18px;height:18px;transform:scaleX(0.8873)">R227</div>
<div class="t" style="left:135.90px;top:701px;font-size:11.5px;line-height:18px;height:18px;transform:scaleX(0.9479)">CMP-009-00124-3[Resistor 53K6 +/-1 % 0402 ...</div>
<div class="t" style="left:379.50px;top:701px;font-size:11.5px;line-height:18px;height:18px;transform:scaleX(0.9225)">27_exp_1.SchDoc</div>
<div class="t" style="left:508.60px;top:701px;font-size:11.5px;line-height:18px;height:18px;transform:scaleX(0.9280)">CMP-009-00...</div>
<div class="t" style="left:586.80px;top:701px;font-size:11.5px;line-height:18px;height:18px;transform:scaleX(0.9281)">Resistor 53K...</div>
<div class="ck" style="left:668px;top:704px"></div>
<div class="t" style="left:683.80px;top:702px;font-size:11.5px;line-height:18px;height:18px;transform:scaleX(1.0192)">Draft</div>
<div class="t" style="left:746.00px;top:701px;font-size:11.5px;line-height:18px;height:18px;transform:scaleX(1.0136)">Up to date</div>
<div class="t" style="left:824.10px;top:701px;font-size:11.5px;line-height:18px;height:18px;transform:scaleX(0.9596)">Company W...</div>
<div class="a" style="left:17px;top:738px;width:1451px;height:1px;background:#353535"></div>
<svg class="ic" style="left:22px;top:722px" width="15" height="14" viewBox="0 0 15 14"><g fill="#bdb9ae"><rect x="0" y="2" width="3" height="1"/><rect x="0" y="5" width="3" height="1"/><rect x="0" y="8" width="3" height="1"/><rect x="0" y="11" width="3" height="1"/><rect x="11" y="2" width="3" height="1"/><rect x="11" y="5" width="3" height="1"/><rect x="11" y="8" width="3" height="1"/><rect x="11" y="11" width="3" height="1"/></g><rect x="3" y="0" width="8" height="14" fill="#4d7de6"/><rect x="4" y="1" width="6" height="12" fill="#84a6ee"/><rect x="4" y="1" width="6" height="1" fill="#d2ddf8"/><rect x="4" y="1" width="1" height="12" fill="#d2ddf8"/></svg>
<div class="t" style="left:42.80px;top:720px;font-size:11.5px;line-height:18px;height:18px;transform:scaleX(0.8873)">R228</div>
<div class="t" style="left:135.90px;top:720px;font-size:11.5px;line-height:18px;height:18px;transform:scaleX(0.9506)">CMP-009-00165-3[Resistor 1M +/-1 % 0402 63...</div>
<div class="t" style="left:379.50px;top:720px;font-size:11.5px;line-height:18px;height:18px;transform:scaleX(0.9225)">27_exp_1.SchDoc</div>
<div class="t" style="left:508.60px;top:720px;font-size:11.5px;line-height:18px;height:18px;transform:scaleX(0.9280)">CMP-009-00...</div>
<div class="t" style="left:586.80px;top:720px;font-size:11.5px;line-height:18px;height:18px;transform:scaleX(0.9509)">Resistor 1M ...</div>
<div class="ck" style="left:668px;top:723px"></div>
<div class="t" style="left:683.80px;top:721px;font-size:11.5px;line-height:18px;height:18px;transform:scaleX(1.0192)">Draft</div>
<div class="t" style="left:746.00px;top:720px;font-size:11.5px;line-height:18px;height:18px;transform:scaleX(1.0136)">Up to date</div>
<div class="t" style="left:824.10px;top:720px;font-size:11.5px;line-height:18px;height:18px;transform:scaleX(0.9596)">Company W...</div>
<div class="a" style="left:17px;top:757px;width:1451px;height:1px;background:#353535"></div>
<svg class="ic" style="left:22px;top:741px" width="15" height="14" viewBox="0 0 15 14"><g fill="#bdb9ae"><rect x="0" y="2" width="3" height="1"/><rect x="0" y="5" width="3" height="1"/><rect x="0" y="8" width="3" height="1"/><rect x="0" y="11" width="3" height="1"/><rect x="11" y="2" width="3" height="1"/><rect x="11" y="5" width="3" height="1"/><rect x="11" y="8" width="3" height="1"/><rect x="11" y="11" width="3" height="1"/></g><rect x="3" y="0" width="8" height="14" fill="#4d7de6"/><rect x="4" y="1" width="6" height="12" fill="#84a6ee"/><rect x="4" y="1" width="6" height="1" fill="#d2ddf8"/><rect x="4" y="1" width="1" height="12" fill="#d2ddf8"/></svg>
<div class="t" style="left:42.80px;top:739px;font-size:11.5px;line-height:18px;height:18px;transform:scaleX(0.8873)">R229</div>
<div class="t" style="left:135.90px;top:739px;font-size:11.5px;line-height:18px;height:18px;transform:scaleX(0.9457)">CMP-009-00149-3[Resistor 10K&nbsp; +/-1 % 0402 6...</div>
<div class="t" style="left:379.50px;top:739px;font-size:11.5px;line-height:18px;height:18px;transform:scaleX(0.9225)">27_exp_1.SchDoc</div>
<div class="t" style="left:508.60px;top:739px;font-size:11.5px;line-height:18px;height:18px;transform:scaleX(0.9280)">CMP-009-00...</div>
<div class="t" style="left:586.80px;top:739px;font-size:11.5px;line-height:18px;height:18px;transform:scaleX(0.9297)">Resistor 10K ...</div>
<div class="ck" style="left:668px;top:742px"></div>
<div class="t" style="left:683.80px;top:740px;font-size:11.5px;line-height:18px;height:18px;transform:scaleX(1.0192)">Draft</div>
<div class="t" style="left:746.00px;top:739px;font-size:11.5px;line-height:18px;height:18px;transform:scaleX(1.0136)">Up to date</div>
<div class="t" style="left:824.10px;top:739px;font-size:11.5px;line-height:18px;height:18px;transform:scaleX(0.9596)">Company W...</div>
<div class="a" style="left:17px;top:776px;width:1451px;height:1px;background:#353535"></div>
<svg class="ic" style="left:22px;top:760px" width="15" height="14" viewBox="0 0 15 14"><g fill="#bdb9ae"><rect x="0" y="2" width="3" height="1"/><rect x="0" y="5" width="3" height="1"/><rect x="0" y="8" width="3" height="1"/><rect x="0" y="11" width="3" height="1"/><rect x="11" y="2" width="3" height="1"/><rect x="11" y="5" width="3" height="1"/><rect x="11" y="8" width="3" height="1"/><rect x="11" y="11" width="3" height="1"/></g><rect x="3" y="0" width="8" height="14" fill="#4d7de6"/><rect x="4" y="1" width="6" height="12" fill="#84a6ee"/><rect x="4" y="1" width="6" height="1" fill="#d2ddf8"/><rect x="4" y="1" width="1" height="12" fill="#d2ddf8"/></svg>
<div class="t" style="left:42.80px;top:758px;font-size:11.5px;line-height:18px;height:18px;transform:scaleX(0.9238)">R23</div>
<div class="t" style="left:135.90px;top:758px;font-size:11.5px;line-height:18px;height:18px;transform:scaleX(0.9479)">CMP-009-00171-3[Resistor 25K5 +/-1 % 0402 ...</div>
<div class="t" style="left:379.50px;top:758px;font-size:11.5px;line-height:18px;height:18px;transform:scaleX(0.9151)">5_dc-dc_vcc5m-vcc3m....</div>
<div class="t" style="left:508.60px;top:758px;font-size:11.5px;line-height:18px;height:18px;transform:scaleX(0.9280)">CMP-009-00...</div>
<div class="t" style="left:586.80px;top:758px;font-size:11.5px;line-height:18px;height:18px;transform:scaleX(0.9281)">Resistor 25K...</div>
<div class="ck" style="left:668px;top:761px"></div>
<div class="t" style="left:683.80px;top:759px;font-size:11.5px;line-height:18px;height:18px;transform:scaleX(1.0192)">Draft</div>
<div class="t" style="left:746.00px;top:758px;font-size:11.5px;line-height:18px;height:18px;transform:scaleX(1.0136)">Up to date</div>
<div class="t" style="left:824.10px;top:758px;font-size:11.5px;line-height:18px;height:18px;transform:scaleX(0.9596)">Company W...</div>
<div class="a" style="left:17px;top:795px;width:1451px;height:1px;background:#353535"></div>
<svg class="ic" style="left:22px;top:779px" width="15" height="14" viewBox="0 0 15 14"><g fill="#bdb9ae"><rect x="0" y="2" width="3" height="1"/><rect x="0" y="5" width="3" height="1"/><rect x="0" y="8" width="3" height="1"/><rect x="0" y="11" width="3" height="1"/><rect x="11" y="2" width="3" height="1"/><rect x="11" y="5" width="3" height="1"/><rect x="11" y="8" width="3" height="1"/><rect x="11" y="11" width="3" height="1"/></g><rect x="3" y="0" width="8" height="14" fill="#4d7de6"/><rect x="4" y="1" width="6" height="12" fill="#84a6ee"/><rect x="4" y="1" width="6" height="1" fill="#d2ddf8"/><rect x="4" y="1" width="1" height="12" fill="#d2ddf8"/></svg>
<div class="t" style="left:42.80px;top:777px;font-size:11.5px;line-height:18px;height:18px;transform:scaleX(0.8873)">R230</div>
<div class="t" style="left:135.90px;top:777px;font-size:11.5px;line-height:18px;height:18px;transform:scaleX(0.9457)">CMP-009-00149-3[Resistor 10K&nbsp; +/-1 % 0402 6...</div>
<div class="t" style="left:379.50px;top:777px;font-size:11.5px;line-height:18px;height:18px;transform:scaleX(0.9225)">27_exp_1.SchDoc</div>
<div class="t" style="left:508.60px;top:777px;font-size:11.5px;line-height:18px;height:18px;transform:scaleX(0.9280)">CMP-009-00...</div>
<div class="t" style="left:586.80px;top:777px;font-size:11.5px;line-height:18px;height:18px;transform:scaleX(0.9297)">Resistor 10K ...</div>
<div class="ck" style="left:668px;top:780px"></div>
<div class="t" style="left:683.80px;top:778px;font-size:11.5px;line-height:18px;height:18px;transform:scaleX(1.0192)">Draft</div>
<div class="t" style="left:746.00px;top:777px;font-size:11.5px;line-height:18px;height:18px;transform:scaleX(1.0136)">Up to date</div>
<div class="t" style="left:824.10px;top:777px;font-size:11.5px;line-height:18px;height:18px;transform:scaleX(0.9596)">Company W...</div>
<div class="a" style="left:17px;top:814px;width:1451px;height:1px;background:#353535"></div>
<svg class="ic" style="left:22px;top:798px" width="15" height="14" viewBox="0 0 15 14"><g fill="#bdb9ae"><rect x="0" y="2" width="3" height="1"/><rect x="0" y="5" width="3" height="1"/><rect x="0" y="8" width="3" height="1"/><rect x="0" y="11" width="3" height="1"/><rect x="11" y="2" width="3" height="1"/><rect x="11" y="5" width="3" height="1"/><rect x="11" y="8" width="3" height="1"/><rect x="11" y="11" width="3" height="1"/></g><rect x="3" y="0" width="8" height="14" fill="#4d7de6"/><rect x="4" y="1" width="6" height="12" fill="#84a6ee"/><rect x="4" y="1" width="6" height="1" fill="#d2ddf8"/><rect x="4" y="1" width="1" height="12" fill="#d2ddf8"/></svg>
<div class="t" style="left:42.80px;top:796px;font-size:11.5px;line-height:18px;height:18px;transform:scaleX(0.8873)">R231</div>
<div class="t" style="left:135.90px;top:796px;font-size:11.5px;line-height:18px;height:18px;transform:scaleX(0.9479)">CMP-009-00168-3[Resistor 100K +/-1 % 0402 ...</div>
<div class="t" style="left:379.50px;top:796px;font-size:11.5px;line-height:18px;height:18px;transform:scaleX(0.9225)">28_exp_2.SchDoc</div>
<div class="t" style="left:508.60px;top:796px;font-size:11.5px;line-height:18px;height:18px;transform:scaleX(0.9280)">CMP-009-00...</div>
<div class="t" style="left:586.80px;top:796px;font-size:11.5px;line-height:18px;height:18px;transform:scaleX(0.9426)">Resistor 100...</div>
<div class="ck" style="left:668px;top:799px"></div>
<div class="t" style="left:683.80px;top:797px;font-size:11.5px;line-height:18px;height:18px;transform:scaleX(1.0192)">Draft</div>
<div class="t" style="left:746.00px;top:796px;font-size:11.5px;line-height:18px;height:18px;transform:scaleX(1.0136)">Up to date</div>
<div class="t" style="left:824.10px;top:796px;font-size:11.5px;line-height:18px;height:18px;transform:scaleX(0.9596)">Company W...</div>
<div class="a" style="left:17px;top:833px;width:1451px;height:1px;background:#353535"></div>
<svg class="ic" style="left:22px;top:817px" width="15" height="14" viewBox="0 0 15 14"><g fill="#bdb9ae"><rect x="0" y="2" width="3" height="1"/><rect x="0" y="5" width="3" height="1"/><rect x="0" y="8" width="3" height="1"/><rect x="0" y="11" width="3" height="1"/><rect x="11" y="2" width="3" height="1"/><rect x="11" y="5" width="3" height="1"/><rect x="11" y="8" width="3" height="1"/><rect x="11" y="11" width="3" height="1"/></g><rect x="3" y="0" width="8" height="14" fill="#4d7de6"/><rect x="4" y="1" width="6" height="12" fill="#84a6ee"/><rect x="4" y="1" width="6" height="1" fill="#d2ddf8"/><rect x="4" y="1" width="1" height="12" fill="#d2ddf8"/></svg>
<div class="t" style="left:42.80px;top:815px;font-size:11.5px;line-height:18px;height:18px;transform:scaleX(0.8873)">R232</div>
<div class="t" style="left:135.90px;top:815px;font-size:11.5px;line-height:18px;height:18px;transform:scaleX(0.9479)">CMP-009-00124-3[Resistor 53K6 +/-1 % 0402 ...</div>
<div class="t" style="left:379.50px;top:815px;font-size:11.5px;line-height:18px;height:18px;transform:scaleX(0.9225)">28_exp_2.SchDoc</div>
<div class="t" style="left:508.60px;top:815px;font-size:11.5px;line-height:18px;height:18px;transform:scaleX(0.9280)">CMP-009-00...</div>
<div class="t" style="left:586.80px;top:815px;font-size:11.5px;line-height:18px;height:18px;transform:scaleX(0.9281)">Resistor 53K...</div>
<div class="ck" style="left:668px;top:818px"></div>
<div class="t" style="left:683.80px;top:816px;font-size:11.5px;line-height:18px;height:18px;transform:scaleX(1.0192)">Draft</div>
<div class="t" style="left:746.00px;top:815px;font-size:11.5px;line-height:18px;height:18px;transform:scaleX(1.0136)">Up to date</div>
<div class="t" style="left:824.10px;top:815px;font-size:11.5px;line-height:18px;height:18px;transform:scaleX(0.9596)">Company W...</div>
<div class="a" style="left:17px;top:852px;width:1451px;height:1px;background:#353535"></div>
<svg class="ic" style="left:22px;top:836px" width="15" height="14" viewBox="0 0 15 14"><g fill="#bdb9ae"><rect x="0" y="2" width="3" height="1"/><rect x="0" y="5" width="3" height="1"/><rect x="0" y="8" width="3" height="1"/><rect x="0" y="11" width="3" height="1"/><rect x="11" y="2" width="3" height="1"/><rect x="11" y="5" width="3" height="1"/><rect x="11" y="8" width="3" height="1"/><rect x="11" y="11" width="3" height="1"/></g><rect x="3" y="0" width="8" height="14" fill="#4d7de6"/><rect x="4" y="1" width="6" height="12" fill="#84a6ee"/><rect x="4" y="1" width="6" height="1" fill="#d2ddf8"/><rect x="4" y="1" width="1" height="12" fill="#d2ddf8"/></svg>
<div class="t" style="left:42.80px;top:834px;font-size:11.5px;line-height:18px;height:18px;transform:scaleX(0.8873)">R233</div>
<div class="t" style="left:135.90px;top:834px;font-size:11.5px;line-height:18px;height:18px;transform:scaleX(0.9506)">CMP-009-00165-3[Resistor 1M +/-1 % 0402 63...</div>
<div class="t" style="left:379.50px;top:834px;font-size:11.5px;line-height:18px;height:18px;transform:scaleX(0.9225)">28_exp_2.SchDoc</div>
<div class="t" style="left:508.60px;top:834px;font-size:11.5px;line-height:18px;height:18px;transform:scaleX(0.9280)">CMP-009-00...</div>
<div class="t" style="left:586.80px;top:834px;font-size:11.5px;line-height:18px;height:18px;transform:scaleX(0.9509)">Resistor 1M ...</div>
<div class="ck" style="left:668px;top:837px"></div>
<div class="t" style="left:683.80px;top:835px;font-size:11.5px;line-height:18px;height:18px;transform:scaleX(1.0192)">Draft</div>
<div class="t" style="left:746.00px;top:834px;font-size:11.5px;line-height:18px;height:18px;transform:scaleX(1.0136)">Up to date</div>
<div class="t" style="left:824.10px;top:834px;font-size:11.5px;line-height:18px;height:18px;transform:scaleX(0.9596)">Company W...</div>
<div class="a" style="left:17px;top:871px;width:1451px;height:1px;background:#353535"></div>
<svg class="ic" style="left:22px;top:855px" width="15" height="14" viewBox="0 0 15 14"><g fill="#bdb9ae"><rect x="0" y="2" width="3" height="1"/><rect x="0" y="5" width="3" height="1"/><rect x="0" y="8" width="3" height="1"/><rect x="0" y="11" width="3" height="1"/><rect x="11" y="2" width="3" height="1"/><rect x="11" y="5" width="3" height="1"/><rect x="11" y="8" width="3" height="1"/><rect x="11" y="11" width="3" height="1"/></g><rect x="3" y="0" width="8" height="14" fill="#4d7de6"/><rect x="4" y="1" width="6" height="12" fill="#84a6ee"/><rect x="4" y="1" width="6" height="1" fill="#d2ddf8"/><rect x="4" y="1" width="1" height="12" fill="#d2ddf8"/></svg>
<div class="t" style="left:42.80px;top:853px;font-size:11.5px;line-height:18px;height:18px;transform:scaleX(0.8873)">R234</div>
<div class="t" style="left:135.90px;top:853px;font-size:11.5px;line-height:18px;height:18px;transform:scaleX(0.9479)">CMP-009-00124-3[Resistor 53K6 +/-1 % 0402 ...</div>
<div class="t" style="left:379.50px;top:853px;font-size:11.5px;line-height:18px;height:18px;transform:scaleX(0.9225)">28_exp_2.SchDoc</div>
<div class="t" style="left:508.60px;top:853px;font-size:11.5px;line-height:18px;height:18px;transform:scaleX(0.9280)">CMP-009-00...</div>
<div class="t" style="left:586.80px;top:853px;font-size:11.5px;line-height:18px;height:18px;transform:scaleX(0.9281)">Resistor 53K...</div>
<div class="ck" style="left:668px;top:856px"></div>
<div class="t" style="left:683.80px;top:854px;font-size:11.5px;line-height:18px;height:18px;transform:scaleX(1.0192)">Draft</div>
<div class="t" style="left:746.00px;top:853px;font-size:11.5px;line-height:18px;height:18px;transform:scaleX(1.0136)">Up to date</div>
<div class="t" style="left:824.10px;top:853px;font-size:11.5px;line-height:18px;height:18px;transform:scaleX(0.9596)">Company W...</div>
<div class="a" style="left:17px;top:890px;width:1451px;height:1px;background:#353535"></div>
<svg class="ic" style="left:22px;top:874px" width="15" height="14" viewBox="0 0 15 14"><g fill="#bdb9ae"><rect x="0" y="2" width="3" height="1"/><rect x="0" y="5" width="3" height="1"/><rect x="0" y="8" width="3" height="1"/><rect x="0" y="11" width="3" height="1"/><rect x="11" y="2" width="3" height="1"/><rect x="11" y="5" width="3" height="1"/><rect x="11" y="8" width="3" height="1"/><rect x="11" y="11" width="3" height="1"/></g><rect x="3" y="0" width="8" height="14" fill="#4d7de6"/><rect x="4" y="1" width="6" height="12" fill="#84a6ee"/><rect x="4" y="1" width="6" height="1" fill="#d2ddf8"/><rect x="4" y="1" width="1" height="12" fill="#d2ddf8"/></svg>
<div class="t" style="left:42.80px;top:872px;font-size:11.5px;line-height:18px;height:18px;transform:scaleX(0.8873)">R235</div>
<div class="t" style="left:135.90px;top:872px;font-size:11.5px;line-height:18px;height:18px;transform:scaleX(0.9506)">CMP-009-00165-3[Resistor 1M +/-1 % 0402 63...</div>
<div class="t" style="left:379.50px;top:872px;font-size:11.5px;line-height:18px;height:18px;transform:scaleX(0.9225)">28_exp_2.SchDoc</div>
<div class="t" style="left:508.60px;top:872px;font-size:11.5px;line-height:18px;height:18px;transform:scaleX(0.9280)">CMP-009-00...</div>
<div class="t" style="left:586.80px;top:872px;font-size:11.5px;line-height:18px;height:18px;transform:scaleX(0.9509)">Resistor 1M ...</div>
<div class="ck" style="left:668px;top:875px"></div>
<div class="t" style="left:683.80px;top:873px;font-size:11.5px;line-height:18px;height:18px;transform:scaleX(1.0192)">Draft</div>
<div class="t" style="left:746.00px;top:872px;font-size:11.5px;line-height:18px;height:18px;transform:scaleX(1.0136)">Up to date</div>
<div class="t" style="left:824.10px;top:872px;font-size:11.5px;line-height:18px;height:18px;transform:scaleX(0.9596)">Company W...</div>
<div class="a" style="left:17px;top:909px;width:1451px;height:1px;background:#353535"></div>
<svg class="ic" style="left:22px;top:893px" width="15" height="14" viewBox="0 0 15 14"><g fill="#bdb9ae"><rect x="0" y="2" width="3" height="1"/><rect x="0" y="5" width="3" height="1"/><rect x="0" y="8" width="3" height="1"/><rect x="0" y="11" width="3" height="1"/><rect x="11" y="2" width="3" height="1"/><rect x="11" y="5" width="3" height="1"/><rect x="11" y="8" width="3" height="1"/><rect x="11" y="11" width="3" height="1"/></g><rect x="3" y="0" width="8" height="14" fill="#4d7de6"/><rect x="4" y="1" width="6" height="12" fill="#84a6ee"/><rect x="4" y="1" width="6" height="1" fill="#d2ddf8"/><rect x="4" y="1" width="1" height="12" fill="#d2ddf8"/></svg>
<div class="t" style="left:42.80px;top:891px;font-size:11.5px;line-height:18px;height:18px;transform:scaleX(0.8873)">R236</div>
<div class="t" style="left:135.90px;top:891px;font-size:11.5px;line-height:18px;height:18px;transform:scaleX(0.9457)">CMP-009-00149-3[Resistor 10K&nbsp; +/-1 % 0402 6...</div>
<div class="t" style="left:379.50px;top:891px;font-size:11.5px;line-height:18px;height:18px;transform:scaleX(0.9225)">28_exp_2.SchDoc</div>
<div class="t" style="left:508.60px;top:891px;font-size:11.5px;line-height:18px;height:18px;transform:scaleX(0.9280)">CMP-009-00...</div>
<div class="t" style="left:586.80px;top:891px;font-size:11.5px;line-height:18px;height:18px;transform:scaleX(0.9297)">Resistor 10K ...</div>
<div class="ck" style="left:668px;top:894px"></div>
<div class="t" style="left:683.80px;top:892px;font-size:11.5px;line-height:18px;height:18px;transform:scaleX(1.0192)">Draft</div>
<div class="t" style="left:746.00px;top:891px;font-size:11.5px;line-height:18px;height:18px;transform:scaleX(1.0136)">Up to date</div>
<div class="t" style="left:824.10px;top:891px;font-size:11.5px;line-height:18px;height:18px;transform:scaleX(0.9596)">Company W...</div>
<div class="a" style="left:17px;top:928px;width:1451px;height:1px;background:#353535"></div>
<svg class="ic" style="left:22px;top:912px" width="15" height="14" viewBox="0 0 15 14"><g fill="#bdb9ae"><rect x="0" y="2" width="3" height="1"/><rect x="0" y="5" width="3" height="1"/><rect x="0" y="8" width="3" height="1"/><rect x="0" y="11" width="3" height="1"/><rect x="11" y="2" width="3" height="1"/><rect x="11" y="5" width="3" height="1"/><rect x="11" y="8" width="3" height="1"/><rect x="11" y="11" width="3" height="1"/></g><rect x="3" y="0" width="8" height="14" fill="#4d7de6"/><rect x="4" y="1" width="6" height="12" fill="#84a6ee"/><rect x="4" y="1" width="6" height="1" fill="#d2ddf8"/><rect x="4" y="1" width="1" height="12" fill="#d2ddf8"/></svg>
<div class="t" style="left:42.80px;top:910px;font-size:11.5px;line-height:18px;height:18px;transform:scaleX(0.8873)">R237</div>
<div class="t" style="left:135.90px;top:910px;font-size:11.5px;line-height:18px;height:18px;transform:scaleX(0.9457)">CMP-009-00149-3[Resistor 10K&nbsp; +/-1 % 0402 6...</div>
<div class="t" style="left:379.50px;top:910px;font-size:11.5px;line-height:18px;height:18px;transform:scaleX(0.9225)">28_exp_2.SchDoc</div>
<div class="t" style="left:508.60px;top:910px;font-size:11.5px;line-height:18px;height:18px;transform:scaleX(0.9280)">CMP-009-00...</div>
<div class="t" style="left:586.80px;top:910px;font-size:11.5px;line-height:18px;height:18px;transform:scaleX(0.9297)">Resistor 10K ...</div>
<div class="ck" style="left:668px;top:913px"></div>
<div class="t" style="left:683.80px;top:911px;font-size:11.5px;line-height:18px;height:18px;transform:scaleX(1.0192)">Draft</div>
<div class="t" style="left:746.00px;top:910px;font-size:11.5px;line-height:18px;height:18px;transform:scaleX(1.0136)">Up to date</div>
<div class="t" style="left:824.10px;top:910px;font-size:11.5px;line-height:18px;height:18px;transform:scaleX(0.9596)">Company W...</div>
<div class="a" style="left:1468px;top:112px;width:1px;height:819px;background:#363636"></div>
<div class="a" style="left:17px;top:931px;width:1467px;height:20px;background:#363636"></div>
<div class="a" style="left:16px;top:931px;width:1468px;height:1px;background:#262626"></div>
<div class="tab" style="left:16px;width:28px;background:#3c3c3c"></div>
<div class="tab" style="left:43px;width:77px;background:#3c3c3c"></div>
<div class="tab" style="left:119px;width:62px;background:#4c4c4c"></div>
<div class="tab" style="left:180px;width:81px;background:#3c3c3c"></div>
<div class="tab" style="left:260px;width:129px;background:#3c3c3c"></div>
<div class="tab" style="left:388px;width:89px;background:#3c3c3c"></div>
<div class="tab" style="left:476px;width:102px;background:#3c3c3c"></div>
<div class="tab" style="left:577px;width:131px;background:#3c3c3c"></div>
<div class="t" style="left:22.00px;top:932px;font-size:11.5px;line-height:18px;height:18px;transform:scaleX(1.0406)">All</div>
<div class="t" style="left:48.60px;top:932px;font-size:11.5px;line-height:18px;height:18px;transform:scaleX(0.9927)">Unmanaged</div>
<div class="t" style="left:124.80px;top:932px;font-size:11.5px;line-height:18px;height:18px;transform:scaleX(1.0027)">Managed</div>
<div class="t" style="left:186.80px;top:932px;font-size:11.5px;line-height:18px;height:18px;transform:scaleX(0.9966)">Components</div>
<div class="t" style="left:265.60px;top:932px;font-size:11.5px;line-height:18px;height:18px;transform:scaleX(1.0049)">Alternate Components</div>
<div class="t" style="left:394.70px;top:932px;font-size:11.5px;line-height:18px;height:18px;transform:scaleX(0.9436)">Sheet Symbols</div>
<div class="t" style="left:481.30px;top:932px;font-size:11.5px;line-height:18px;height:18px;transform:scaleX(0.9960)">Ambiguous Items</div>
<div class="t" style="left:583.30px;top:932px;font-size:11.5px;line-height:18px;height:18px;transform:scaleX(1.0342)">Ambiguous Footprints</div>
<div class="btn" style="left:8px;width:75px"></div>
<div class="t" style="left:19.80px;top:972px;font-size:12px;line-height:18px;height:18px;transform:scaleX(0.9872)">Options...</div>
<div class="a" style="left:20px;top:985px;width:9px;height:1px;background:#e8e8e8"></div>
<div class="btn" style="left:1219px;width:107px"></div>
<div class="t" style="left:1240.10px;top:972px;font-size:12px;line-height:18px;height:18px;transform:scaleX(0.9573)">Automatch...</div>
<div class="btn" style="left:1334px;width:75px"></div>
<div class="t" style="left:1348.30px;top:972px;font-size:12px;line-height:18px;height:18px;transform:scaleX(0.8607)">ECO...</div>
<div class="a" style="left:1393px;top:970px;width:1px;height:20px;background:#2a2a2a"></div>
<svg class="a" style="left:1396px;top:977px" width="10" height="6"><path d="M0.5 0L9.5 0L5 4.5Z" fill="#f4f4f4"/></svg>
<div class="btn" style="left:1417px;width:75px"></div>
<div class="t" style="left:1439.80px;top:972px;font-size:12px;line-height:18px;height:18px;transform:scaleX(0.8961)">Close</div>
<div class="a" style="left:671px;top:319px;width:190px;height:187px;background:#404040;border:1px solid #262626;border-top:2px solid #262626;border-right:2px solid #262626"></div>
<div class="a" style="left:672px;top:321px;width:187px;height:24px;background:#6282a3"></div>
<div class="t" style="left:705.60px;top:324px;font-size:12px;line-height:18px;height:18px;color:#e6e6e6;transform:scaleX(0.9810)">Update to latest revision</div>
<div class="t" style="left:705.60px;top:348px;font-size:12px;line-height:18px;height:18px;color:#e6e6e6;transform:scaleX(1.0019)">Automatch...</div>
<div class="t" style="left:705.60px;top:372px;font-size:12px;line-height:18px;height:18px;color:#e6e6e6;transform:scaleX(0.9848)">Choose manually...</div>
<div class="t" style="left:705.60px;top:401px;font-size:12px;line-height:18px;height:18px;color:#e6e6e6;transform:scaleX(0.8993)">Refresh</div>
<div class="t" style="left:705.60px;top:430px;font-size:12px;line-height:18px;height:18px;color:#e6e6e6;transform:scaleX(0.9385)">Cross Probe</div>
<div class="t" style="left:705.60px;top:454px;font-size:12px;line-height:18px;height:18px;color:#e6e6e6;transform:scaleX(0.9557)">Show in Explorer</div>
<div class="t" style="left:705.60px;top:483px;font-size:12px;line-height:18px;height:18px;color:#e6e6e6;transform:scaleX(0.9264)">Export...</div>
<div class="t" style="left:819.00px;top:401px;font-size:12px;line-height:18px;height:18px;color:#e6e6e6;transform:scaleX(0.8062)">F5</div>
<div class="sep" style="top:395px"></div>
<div class="sep" style="top:424px"></div>
<div class="sep" style="top:477px"></div>
<svg class="a" style="left:0;top:0" width="1500" height="1000" viewBox="0 0 1500 1000"><rect x="1317.5" y="276.5" width="110" height="51" rx="5" ry="5" fill="none" stroke="#ff7100" stroke-width="3"/><path d="M841 334.2 L1296 322.4" stroke="#ff7100" stroke-width="3" stroke-linecap="round" fill="none"/><path d="M1293 311 L1317 322.5 L1293 335 Z" fill="#ff7100"/></svg>
<svg class="a" style="left:764px;top:343px" width="13" height="20" viewBox="0 0 13 20"><path d="M0.5 0.5 L0.5 16.5 L4.3 12.8 L7.3 18.8 L9.6 17.8 L6.8 12 L11.6 12 Z" fill="#fff" stroke="#000" stroke-width="1.1" stroke-linejoin="miter"/></svg>
</body></html>
